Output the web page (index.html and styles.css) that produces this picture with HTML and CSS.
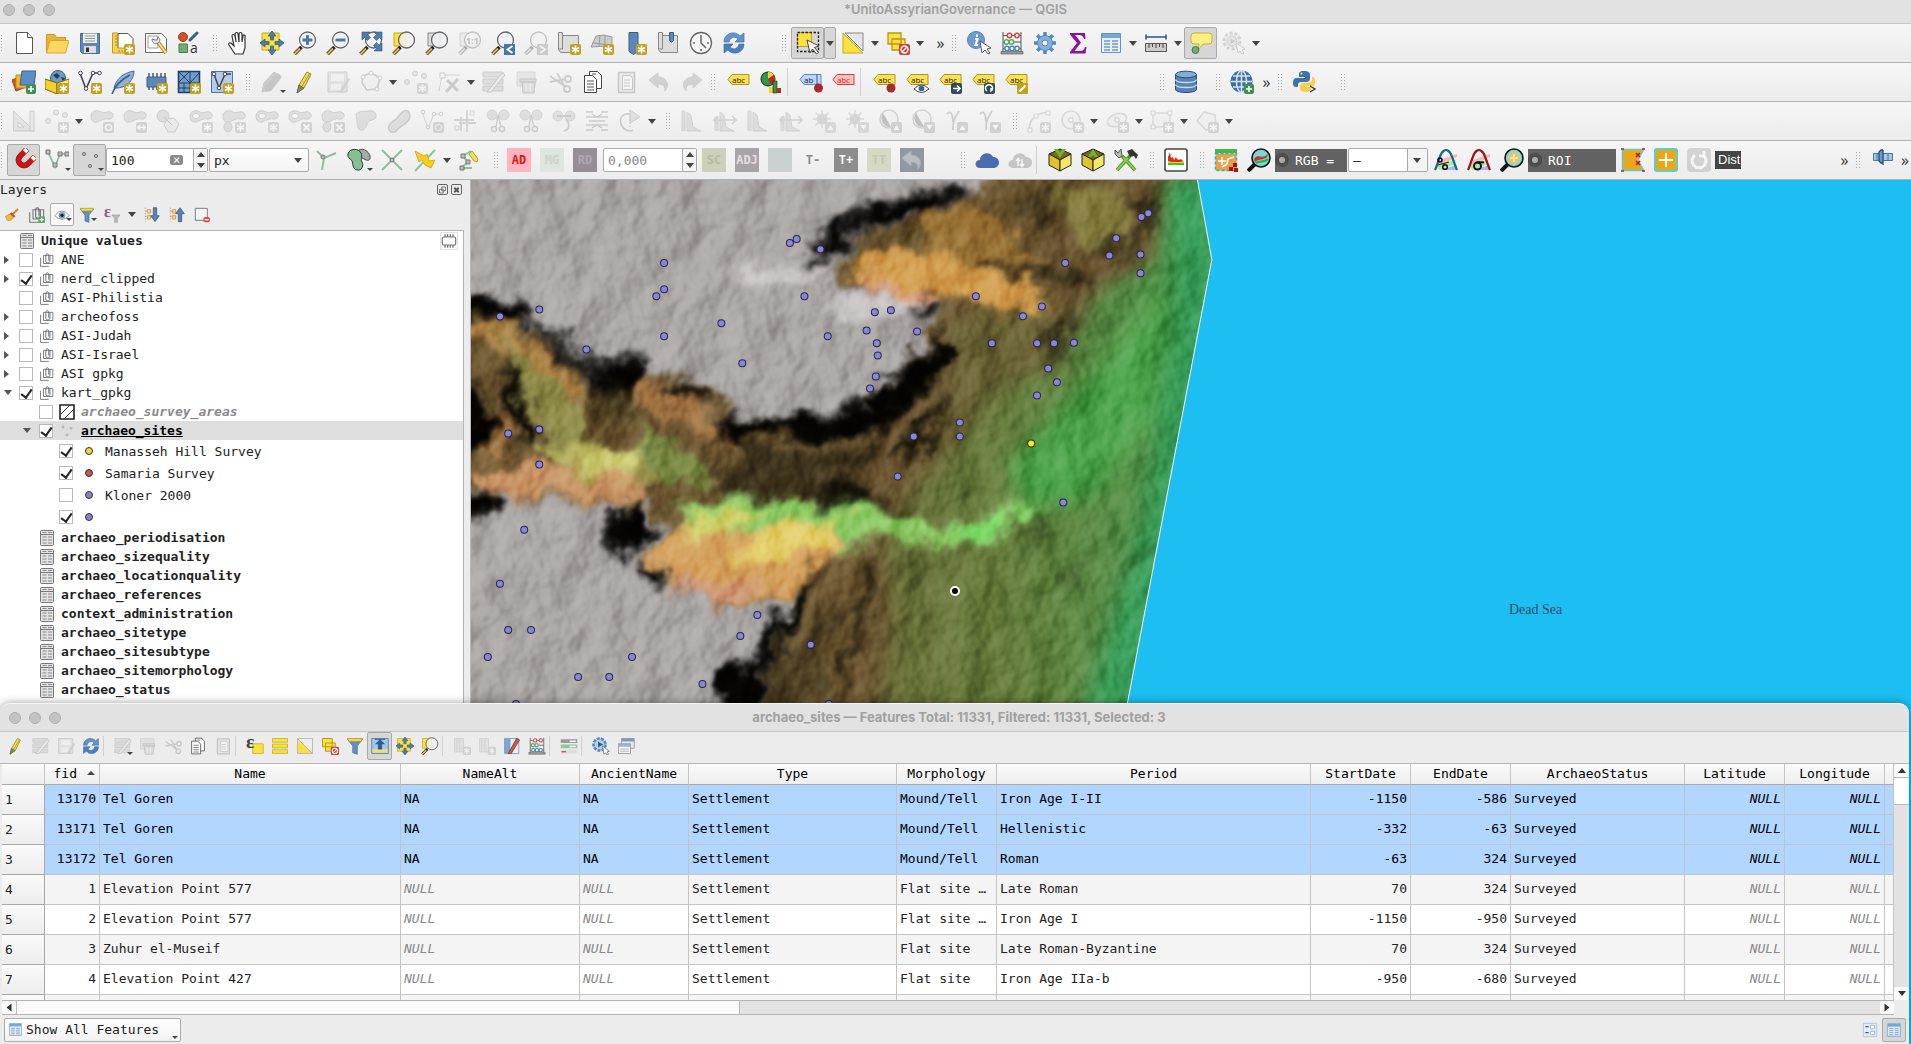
FILE: index.html
```html
<!DOCTYPE html>
<html lang="en">
<head>
<meta charset="utf-8">
<title>*UnitoAssyrianGovernance — QGIS</title>
<link rel="stylesheet" href="styles.css">
</head>
<body>
<svg class="defs" aria-hidden="true">
<defs>
<symbol id="star" viewBox="0 0 24 24"><rect x="13" y="13" width="11" height="11" rx="2" fill="#c4a01c"/><path d="M18.5 14.5v8M15 16.500l7 4M22 16.500l-7 4" stroke="#fff" stroke-width="1.500"/></symbol>
<symbol id="mag" viewBox="0 0 24 24"><path d="M1.500 23l7-7" stroke="#222" stroke-width="3.500"/><path d="M1.500 23l5.500-5.500" stroke="#f0b93c" stroke-width="2"/><circle cx="14.500" cy="9" r="8" fill="#eef1f2" fill-opacity=".85" stroke="#666" stroke-width="1.300"/></symbol>
<symbol id="new" viewBox="0 0 24 24"><path d="M4.500 1.500h11l5 5v16h-16z" fill="#fff" stroke="#555"/><path d="M15.500 1.500v5h5" fill="#eee" stroke="#555"/></symbol>
<symbol id="open" viewBox="0 0 24 24"><path d="M1.500 22V3.500h8l2 3h9V10" fill="#e8b23a" stroke="#d29a22"/><path d="M1.500 22L5 9.500h19L20.500 22z" fill="#fcd660" stroke="#dba42c"/></symbol>
<symbol id="save" viewBox="0 0 24 24"><path d="M2.500 2.500h19v20h-17l-2-2z" fill="#5b88b8" stroke="#456f9c"/><path d="M5 2.500h14V12H5z" fill="#eee"/><path d="M7 5h10M7 7.500h10M7 10h10" stroke="#999"/><path d="M6 15h12v7H6z" fill="#ddd"/><path d="M8 16.500h3v4.500H8z" fill="#333"/></symbol>
<symbol id="layout" viewBox="0 0 24 24"><path d="M7 2.500h10l5 5v13H7z" fill="#fff" stroke="#555"/><path d="M1.500 2h5v15h9v5h-14z" fill="#f7d354" stroke="#c09a1e"/><path d="M4 5h2M4 8h2M4 11h2M4 14h2M8 19v2M11 19v2" stroke="#a8851a"/><use href="#star"/></symbol>
<symbol id="mgr" viewBox="0 0 24 24"><path d="M1.500 2.500h16l5 5v14h-21z" fill="#fff" stroke="#666"/><path d="M4 5h10v12H4z" fill="none" stroke="#999"/><path d="M14 11l8 11" stroke="#b4952c" stroke-width="4"/><path d="M14 11l8 11" stroke="#f5df7c" stroke-width="2"/><path d="M8 8c0 4 3 6 6 4s2-5 0-6l-1 3-2 0z" fill="#e4e4e4" stroke="#777"/></symbol>
<symbol id="style" viewBox="0 0 24 24"><circle cx="6" cy="6" r="4.500" fill="#d1512a" stroke="#a83a1a"/><path d="M2 13h8.500v8.500H2z" fill="#6fae73" stroke="#477b4b"/><path d="M13 9l7-7" stroke="#37608c" stroke-width="3" stroke-linecap="round"/><text x="13" y="22" font-size="14" font-family="Open Sans, sans-serif" fill="#333">a</text></symbol>
<symbol id="hand" viewBox="0 0 24 24"><path d="M8 23l-6-9c-1-2 1-3 3-1l2 2-2-10c0-2 2-2 3 0l1 6-1-8c0-2 3-2 3 0l1 8V3c0-2 3-2 3 0v8l1-6c0-2 3-1 2 1l0 11-2 6z" fill="#fff" stroke="#333" stroke-width="1.200"/></symbol>
<symbol id="arrows" viewBox="0 0 24 24"><path d="M12 0l4 5h-2.500v4h-3V5H8zM12 24l4-5h-2.500v-4h-3v4H8zM0 12l5-4v2.500h4v3H5V16zM24 12l-5-4v2.500h-4v3h4V16z" fill="#4d7cae" stroke="#2d527d" stroke-width=".7"/></symbol>
<symbol id="pan" viewBox="0 0 24 24"><path d="M2 2h17v17H2z" fill="#fbe13f" stroke="#c7a916"/><use href="#arrows"/></symbol>
<symbol id="zin" viewBox="0 0 24 24"><use href="#mag"/><path d="M14.500 4v10M9.500 9h10" stroke="#4576ab" stroke-width="2.800"/></symbol>
<symbol id="zout" viewBox="0 0 24 24"><use href="#mag"/><path d="M9.500 9h10" stroke="#4576ab" stroke-width="2.800"/></symbol>
<symbol id="zfull" viewBox="0 0 24 24"><use href="#mag"/><path d="M3 1h8L8.500 3.500l3 3-3 3-3-3L3 9zM23 1v8l-2.500-2.500-3 3-3-3 3-3L15 1zM23 20h-8l2.500-2.500-3-3 3-3 3 3L23 12z" fill="#4d7cae" stroke="#2d527d" stroke-width=".6"/></symbol>
<symbol id="zsel" viewBox="0 0 24 24"><path d="M2 2h12v13H2z" fill="#fbe13f" stroke="#c7a916"/><use href="#mag"/></symbol>
<symbol id="zlay" viewBox="0 0 24 24"><path d="M3 2h12v13H3z" fill="#ddd" stroke="#888"/><use href="#mag"/></symbol>
<symbol id="znat" viewBox="0 0 24 24"><path d="M2 2h18v13H2z" fill="#ddd" stroke="#999"/><use href="#mag"/><text x="8" y="13" font-size="9" font-family="Open Sans, sans-serif" font-weight="700" fill="#555">1:1</text></symbol>
<symbol id="zlast" viewBox="0 0 24 24"><use href="#mag"/><path d="M13 13h11v11H13z" fill="#4576ab"/><path d="M21.500 15l-5 3.500 5 3.500" fill="none" stroke="#fff" stroke-width="1.800"/></symbol>
<symbol id="znext" viewBox="0 0 24 24"><use href="#mag"/><path d="M13 13h11v11H13z" fill="#888"/><path d="M16 15l5 3.500-5 3.500" fill="none" stroke="#fff" stroke-width="1.800"/></symbol>
<symbol id="nmap" viewBox="0 0 24 24"><path d="M1.500 1.500h4v3h16v17h-18l-2-3z" fill="#ddd" stroke="#888"/><path d="M5.500 4v14h-4" fill="none" stroke="#888"/><use href="#star"/></symbol>
<symbol id="n3d" viewBox="0 0 24 24"><path d="M1 16L6 5l8-1 8 2v13l-6-4z" fill="#ccc" stroke="#999"/><path d="M3 12l18 2M10 4l-1 12M15 4v11" stroke="#999" fill="none"/><use href="#star"/></symbol>
<symbol id="bm" viewBox="0 0 24 24"><path d="M6 1.500h9v19l-4.500 3-4.500-3z" fill="#5b88b8" stroke="#35608f"/><use href="#star"/></symbol>
<symbol id="bms" viewBox="0 0 24 24"><path d="M2.500 1.500h4v3h15v17h-17l-2-3z" fill="#ddd" stroke="#888"/><path d="M6.500 4v14h-4" fill="none" stroke="#888"/><path d="M13.500 1.500h4v8l-2 2-2-2z" fill="#5b88b8" stroke="#35608f"/></symbol>
<symbol id="clock" viewBox="0 0 24 24"><circle cx="12" cy="12" r="10.500" fill="#f6f6f6" stroke="#666" stroke-width="1.300"/><path d="M12 4v8l5 5M12 20v-2M4 12h2M20 12h-2" fill="none" stroke="#666" stroke-width="1.500"/></symbol>
<symbol id="refresh" viewBox="0 0 24 24"><path d="M2 11c0-9 11-12 16-6l4-3v9h-9l3-3c-4-4-8-1-9 3z" fill="#5d94cf" stroke="#3b6da6" stroke-width=".7"/><path d="M22 13c0 9-11 12-16 6l-4 3v-9h9l-3 3c4 4 8 1 9-3z" fill="#4a7fbb" stroke="#3b6da6" stroke-width=".7"/></symbol>
<symbol id="sel" viewBox="0 0 24 24"><path d="M1.500 1.500h14v14h-14z" fill="#fbe13f" stroke="#c7a916"/><path d="M1.500 1.500h21v19h-21z" fill="none" stroke="#222" stroke-dasharray="2.500 1.500" stroke-width="1.400"/><path d="M11 9l12 6-4.500 1.500 4 5-2 1.500-4-5-2.500 4z" fill="#fff" stroke="#444"/></symbol>
<symbol id="selval" viewBox="0 0 24 24"><path d="M2 2l20 20H2z" fill="#fbe13f" stroke="#c7a916"/><path d="M4 2h18v18z" fill="#e6e6e6" stroke="#888"/></symbol>
<symbol id="desel" viewBox="0 0 24 24"><path d="M2 2h13v11H2zM6 8h13v11H6z" fill="#fbe13f" stroke="#b59613" stroke-width="1.300"/><rect x="13" y="13" width="11" height="11" rx="2" fill="#d93a3a"/><circle cx="18.500" cy="18.500" r="3.500" fill="none" stroke="#fff" stroke-width="1.400"/><path d="M16 21l5-5" stroke="#fff" stroke-width="1.400"/></symbol>
<symbol id="ident" viewBox="0 0 24 24"><circle cx="9" cy="9" r="8.500" fill="#6c9cce" stroke="#5483b5"/><path d="M10 3.500v2.500M8 8h2.500l-2 6h2.500" fill="none" stroke="#fff" stroke-width="2"/><path d="M13 10l11 7-4 1 3 4-2 1-3-4-3 3z" fill="#fff" stroke="#555"/></symbol>
<symbol id="abac" viewBox="0 0 24 24"><path d="M3 1v21M21 1v21M3 4.500h18M3 11h18M3 17.500h18" stroke="#555" fill="none"/><path d="M1 20.500h22v2.500H1z" fill="#999" stroke="#555" stroke-width=".6"/><g fill="#fff" stroke-width="1.500"><g stroke="#d04444"><circle cx="9.500" cy="4.500" r="2.200"/><circle cx="17" cy="4.500" r="2.200"/></g><g stroke="#5aa66a"><circle cx="6.500" cy="11" r="2.200"/><circle cx="11.500" cy="11" r="2.200"/></g><g stroke="#4a84b8"><circle cx="7" cy="17.500" r="2.200"/><circle cx="12" cy="17.500" r="2.200"/><circle cx="17" cy="17.500" r="2.200"/></g></g></symbol>
<symbol id="gear" viewBox="0 0 24 24"><path d="M12 1v22M1 12h22M4.200 4.200l15.600 15.600M19.800 4.200L4.200 19.800" stroke="#5887ba" stroke-width="3.500"/><circle cx="12" cy="12" r="7.500" fill="#84b0dd" stroke="#5887ba"/><circle cx="12" cy="12" r="3" fill="#f2f2f2" stroke="#5887ba"/></symbol>
<symbol id="sigma" viewBox="0 0 24 24"><path d="M4 2h15l.5 6h-1.500c-1-3-2-4-5-4H9l6 7.500L8.500 20H14c3 0 4-1 5-4h1.500l-1 6.500H4V21l7-9-7-8.500z" fill="#8d1299"/></symbol>
<symbol id="tbl" viewBox="0 0 24 24"><path d="M2.500 2.500h19v19h-19z" fill="#e8f0f8" stroke="#6890b8"/><path d="M3 3h18v4H3z" fill="#7ba6d3"/><path d="M5 10h6M13 10h6M5 13h6M13 13h6M5 16h6M13 16h6M5 19h6M13 19h6" stroke="#6d9bc9" stroke-width="1.300"/></symbol>
<symbol id="meas" viewBox="0 0 24 24"><path d="M2 6h20M2 3.500v5M22 3.500v5" stroke="#2d5385" stroke-width="1.500"/><path d="M1.500 12.500h21v8h-21z" fill="#ccc" stroke="#555"/><path d="M5 13v4M8.500 13v3M12 13v4M15.500 13v3M19 13v4" stroke="#444"/></symbol>
<symbol id="tip" viewBox="0 0 24 24"><path d="M5 2h15q3 0 3 3v5q0 3-3 3h-6l-5 6 1-6H5q-3 0-3-3V5q0-3 3-3z" fill="#fbef82" stroke="#c6b04a"/><circle cx="6.500" cy="19" r="3.500" fill="#76a876" stroke="#4b7a4b"/></symbol>
<symbol id="act" viewBox="0 0 24 24"><circle cx="10" cy="10" r="8" fill="#e8e8e8" stroke="#999" stroke-width="3" stroke-dasharray="3 2"/><circle cx="10" cy="10" r="5" fill="#ccc" stroke="#888"/><path d="M8.500 7.500l5 2.500-5 3z" fill="#888"/><path d="M14 12l9 6-3 1 2 3-2 1-2-3-2 2z" fill="#fff" stroke="#888"/></symbol>
<symbol id="dsm" viewBox="0 0 24 24"><path d="M0 10l10-4 4 11-10 4z" fill="#d2562a" stroke="#a63c18"/><path d="M4 5h13v13H4z" fill="#f0b92e" stroke="#b98a18"/><path d="M10 1h14l-2 14H8z" fill="#5b8ec4" stroke="#37618f"/><rect x="14" y="14" width="10" height="10" rx="2" fill="#3f8f54"/><path d="M19 16v6M16 19h6" stroke="#fff" stroke-width="1.600"/></symbol>
<symbol id="gpkg" viewBox="0 0 24 24"><circle cx="13" cy="8" r="7.500" fill="#6d9cc9" stroke="#365f8a"/><path d="M8 5l4-2 3 3-3 3zM16 7l4 1-2 4z" fill="#243f5e"/><path d="M0 9l12 4v11L0 19z" fill="#f3d22c" stroke="#7d6510"/><path d="M12 13l12-4v10l-12 5z" fill="#fbe76c" stroke="#7d6510"/><use href="#star"/></symbol>
<symbol id="vnew" viewBox="0 0 24 24"><path d="M2 3l6 16 7-16h7" fill="none" stroke="#445" stroke-width="1.600"/><g fill="#fff" stroke="#445"><circle cx="2.500" cy="3" r="1.800"/><circle cx="8" cy="18.500" r="1.800"/><circle cx="15" cy="3" r="1.800"/><circle cx="21.500" cy="3" r="1.800"/></g><use href="#star"/></symbol>
<symbol id="feath" viewBox="0 0 24 24"><path d="M3 18C5 9 12 3 23 1c0 8-6 16-16 17z" fill="#8db2dc" stroke="#456f9f"/><path d="M1 24C4 16 11 9 19 5" fill="none" stroke="#345a86" stroke-width="1.500"/><use href="#star"/></symbol>
<symbol id="chip" viewBox="0 0 24 24"><path d="M5 3v17M9 3v17M13 3v17M17 3v17M21 3v17" stroke="#345" stroke-width="1.300"/><path d="M3 7h19v10H3z" fill="#5b88b8" stroke="#35608f"/><use href="#star"/></symbol>
<symbol id="mesh" viewBox="0 0 24 24"><path d="M1.500 1.500h21v21h-21z" fill="#6f9dce" stroke="#223f60" stroke-width="1.600"/><path d="M13 1v22M1 13h22M1 1l12 12L23 2M1 13L12 2M7 13v10M1 18h12" stroke="#223f60" fill="none"/><use href="#star"/></symbol>
<symbol id="gpx" viewBox="0 0 24 24"><path d="M1.500 1.500h21v21h-21z" fill="#b5cde8" stroke="#4676a8"/><path d="M4 4l5 14 6-14h6" fill="none" stroke="#445" stroke-width="1.500"/><g fill="#fff" stroke="#445"><circle cx="4" cy="4" r="1.800"/><circle cx="9" cy="18" r="1.800"/><circle cx="15" cy="4" r="1.800"/></g><use href="#star"/></symbol>
<symbol id="pens" viewBox="0 0 24 24"><path d="M2 22l2-9L14 2l6 4-9 13z" fill="#888" stroke="#777"/><path d="M5 22l1-7L18 3l4 4-11 14z" fill="#777"/></symbol>
<symbol id="pen" viewBox="0 0 24 24"><path d="M4 23l2-8 8-13 4 2-7 14z" fill="#f3dd4b" stroke="#9a8420"/><path d="M4 23l2-8 5 3z" fill="#8a8a6a" stroke="#555" stroke-width=".7"/><path d="M9 16l8-13" stroke="#a9922a"/></symbol>
<symbol id="sedit" viewBox="0 0 24 24"><path d="M2 2h19v20H2z" fill="#c8c8c8" stroke="#888"/><path d="M5 4h13v7H5zM5 14h10v6H5z" fill="#eee"/><path d="M13 22l9-14 2 1-8 14z" fill="#999"/></symbol>
<symbol id="poly" viewBox="0 0 24 24"><path d="M4 6l8-3 9 5-3 11-10 1-5-7z" fill="#eee" stroke="#888" stroke-width="1.600"/><g fill="#fff" stroke="#888"><circle cx="12" cy="3" r="2"/><circle cx="21" cy="8" r="2"/><circle cx="18" cy="19" r="2"/><circle cx="4" cy="7" r="2"/></g></symbol>
<symbol id="pts" viewBox="0 0 24 24"><g fill="#ccc" stroke="#888"><circle cx="3" cy="12" r="2.500"/><circle cx="11" cy="3.500" r="2.500"/><circle cx="20" cy="6" r="2.500"/></g><use href="#star"/></symbol>
<symbol id="vert" viewBox="0 0 24 24"><path d="M5 6L2 21M5 5h18" stroke="#999"/><path d="M3 3h5v5H3z" fill="#fff" stroke="#888"/><path d="M9 22L21 9M10 10l11 11" stroke="#888" stroke-width="3"/></symbol>
<symbol id="multi" viewBox="0 0 24 24"><path d="M1 2h20v5H1zM1 9h20v5H1zM1 16h20v5H1z" fill="#bbb" stroke="#888"/><path d="M5 22L20 3l3 2L9 22z" fill="#ddd" stroke="#777"/></symbol>
<symbol id="trash" viewBox="0 0 24 24"><path d="M2 2h18v14H2z" fill="#ccc" stroke="#aaa"/><path d="M5 9h16v3H5zM7 12h13l-1 11H8z" fill="#bbb" stroke="#777"/><path d="M11 14v7M15 14v7" stroke="#eee" stroke-width="1.500"/></symbol>
<symbol id="cut" viewBox="0 0 24 24"><path d="M2 6l16 11M9 3l8 14" stroke="#888" stroke-width="1.800"/><circle cx="20" cy="9" r="3" fill="none" stroke="#888" stroke-width="1.800"/><circle cx="19" cy="19" r="3" fill="none" stroke="#888" stroke-width="1.800"/><path d="M2 12l16-3" stroke="#888" stroke-width="1.800"/></symbol>
<symbol id="copy" viewBox="0 0 24 24"><path d="M8.500 1.500h8l4 4v13h-12z" fill="#fff" stroke="#444"/><path d="M3.500 5.500h8l4 4v13h-12z" fill="#fff" stroke="#444"/><path d="M6 11h7M6 14h7M6 17h7M6 20h7M11 4h4" stroke="#555"/></symbol>
<symbol id="paste" viewBox="0 0 24 24"><path d="M4.500 2.500h16v20h-16z" fill="#ddd" stroke="#777" stroke-width="1.500"/><path d="M8.500 5.500h8l2 3v11h-10z" fill="#fff" stroke="#777"/><path d="M10 10h6M10 13h6M10 16h6" stroke="#777"/></symbol>
<symbol id="undo" viewBox="0 0 24 24"><path d="M2 10l9-7v4c9 0 12 8 7 14 0-5-2-7-7-7v4z" fill="#999" stroke="#888"/></symbol>
<symbol id="redo" viewBox="0 0 24 24"><path d="M22 10l-9-7v4c-9 0-12 8-7 14 0-5 2-7 7-7v4z" fill="#999" stroke="#888"/></symbol>
<symbol id="tagy" viewBox="0 0 24 24"><path d="M2 9.500l4-5h17v10H6z" fill="#f8e154" stroke="#b4961a"/><text x="6" y="12.500" font-size="8" font-family="Open Sans, sans-serif" fill="#222">abc</text></symbol>
<symbol id="tagb" viewBox="0 0 24 24"><path d="M1 9.500l4-5h17v10H5z" fill="#bcd6f5" stroke="#4f8fdc"/><text x="5" y="12.500" font-size="8" font-family="Open Sans, sans-serif" fill="#222">ab</text><path d="M18 4v10" stroke="#557"/><circle cx="19.500" cy="18" r="4.500" fill="#a92a2c"/></symbol>
<symbol id="tagr" viewBox="0 0 24 24"><path d="M1 9.500l4-5h17v10H5z" fill="#fbc4c4" stroke="#e33"/><text x="5" y="12.500" font-size="8" font-family="Open Sans, sans-serif" fill="#d22">abc</text></symbol>
<symbol id="tagp" viewBox="0 0 24 24"><use href="#tagy"/><circle cx="19" cy="18" r="4.500" fill="#a92a2c"/></symbol>
<symbol id="tage" viewBox="0 0 24 24"><use href="#tagy"/><path d="M9 19q7.500-8 15 0-7.500 7-15 0z" fill="#fff" stroke="#444"/><circle cx="16.500" cy="18.500" r="2.800" fill="#2f62a8"/></symbol>
<symbol id="tagm" viewBox="0 0 24 24"><use href="#tagy"/><rect x="13" y="13" width="11" height="11" rx="2" fill="#34495e"/><path d="M15 18.500h7M19 15.500l3 3-3 3" fill="none" stroke="#fff" stroke-width="1.600"/></symbol>
<symbol id="tagt" viewBox="0 0 24 24"><use href="#tagy"/><rect x="13" y="13" width="11" height="11" rx="2" fill="#34495e"/><path d="M16 21a3.500 3.500 0 1 1 4 0v-3" fill="none" stroke="#fff" stroke-width="1.500"/></symbol>
<symbol id="tagc" viewBox="0 0 24 24"><use href="#tagy"/><rect x="13" y="13" width="11" height="11" rx="1" fill="#c4a01c"/><path d="M15.500 21.500l6-6" stroke="#fff" stroke-width="2.200"/></symbol>
<symbol id="diag" viewBox="0 0 24 24"><circle cx="9" cy="9" r="7" fill="#2e9a48" stroke="#222"/><path d="M9 9V2a7 7 0 0 1 6 3z" fill="#fbd32f"/><path d="M9 9l6-4a7 7 0 0 1-3 10z" fill="#c92222"/><path d="M10 17h4v6h-4z" fill="#fbd32f"/><path d="M14 11h4v12h-4z" fill="#2e9a48" stroke="#222" stroke-width=".6"/><path d="M18 18h4v5h-4z" fill="#c92222"/></symbol>
<symbol id="db" viewBox="0 0 24 24"><path d="M1.500 4.500v15c0 4 21 4 21 0v-15" fill="#5583b4" stroke="#2c4f78"/><ellipse cx="12" cy="4.500" rx="10.500" ry="3.300" fill="#84abd4" stroke="#2c4f78"/><path d="M1.500 9.500c0 4 21 4 21 0M1.500 14.500c0 4 21 4 21 0" fill="none" stroke="#c9dbee" stroke-width="1.300"/></symbol>
<symbol id="globe" viewBox="0 0 24 24"><circle cx="11.500" cy="11.500" r="11" fill="#3f6da2"/><g fill="none" stroke="#d5e4f2" stroke-width="1.500"><ellipse cx="11.500" cy="11.500" rx="5" ry="11"/><path d="M11.500 1v21M1 11.500h21M3 6h17M3 17h17"/></g><rect x="14" y="14" width="10" height="10" rx="2" fill="#3f8f54"/><path d="M19 16v6M16 19h6" stroke="#fff" stroke-width="1.600"/></symbol>
<symbol id="py" viewBox="0 0 24 24"><path d="M11 1c-5 0-5 2-5 4v2h6v1H4c-3 0-4 2-4 5s1 4 3 4h2v-2c0-2 1-3 4-3h4c2 0 4-1 4-3V5c0-3-2-4-6-4z" fill="#3b74a8"/><path d="M19 7v3c0 2-2 3-4 3h-4c-2 0-4 1-4 3v3c0 2 2 3 6 3 3 0 5-1 5-3v-2h-6v-1h7c3 0 3-2 3-5s-1-4-3-4z" fill="#f8cf43"/><circle cx="8.500" cy="3.500" r="1" fill="#fff"/><path d="M17 16l5 3-5 3" fill="none" stroke="#333" stroke-width="1.300"/></symbol>
<symbol id="tri" viewBox="0 0 24 24"><path d="M1.500 2v20h21z" fill="#ccc" stroke="#888"/><path d="M6 13v5h6z" fill="#f4f4f4" stroke="#888"/><path d="M18 2h4v20h-4z" fill="#ddd" stroke="#888"/></symbol>
<symbol id="blob" viewBox="0 0 24 24"><path d="M1 7c0-6 7-6 10-4s8-2 11 1 0 7-4 6-7 2-11 3-6-2-6-6z" fill="#bbb" stroke="#888"/></symbol>
<symbol id="bl1" viewBox="0 0 24 24"><use href="#blob"/><rect x="13" y="13" width="11" height="11" rx="2" fill="#999"/><circle cx="18.500" cy="18.500" r="3" fill="none" stroke="#fff" stroke-width="1.600"/></symbol>
<symbol id="bl2" viewBox="0 0 24 24"><use href="#blob"/><rect x="13" y="13" width="11" height="11" rx="2" fill="#999"/><path d="M15 18.500h7M17 16l-2.500 2.500L17 21M20 16l2.500 2.500L20 21" fill="none" stroke="#fff" stroke-width="1.400"/></symbol>
<symbol id="bl3" viewBox="0 0 24 24"><circle cx="7" cy="7" r="6" fill="#bbb" stroke="#888"/><path d="M11 10l7-1 5 6-4 8h-7l-4-7z" fill="#ddd" stroke="#888"/><path d="M8 8l8 8" stroke="#777"/></symbol>
<symbol id="bl4" viewBox="0 0 24 24"><use href="#blob"/><ellipse cx="7" cy="7" rx="3.500" ry="2.500" fill="#fff" stroke="#888"/><use href="#star"/></symbol>
<symbol id="bl5" viewBox="0 0 24 24"><use href="#blob"/><ellipse cx="6" cy="18" rx="4" ry="5" fill="#bbb" stroke="#888"/><use href="#star"/></symbol>
<symbol id="bl6" viewBox="0 0 24 24"><use href="#blob"/><ellipse cx="7" cy="7" rx="3.500" ry="2.500" fill="#fff" stroke="#888"/><rect x="13" y="13" width="11" height="11" rx="2" fill="#999"/><path d="M15.500 15.500l6 6M21.500 15.500l-6 6" stroke="#fff" stroke-width="1.800"/></symbol>
<symbol id="bl7" viewBox="0 0 24 24"><use href="#blob"/><ellipse cx="6" cy="18" rx="4" ry="5" fill="#bbb" stroke="#888"/><rect x="13" y="13" width="11" height="11" rx="2" fill="#999"/><path d="M15.500 15.500l6 6M21.500 15.500l-6 6" stroke="#fff" stroke-width="1.800"/></symbol>
<symbol id="resh" viewBox="0 0 24 24"><path d="M2 5c5-4 9-2 13-3s8 2 7 6-8 2-9 7-5 8-8 5-1-8-3-15z" fill="#bbb" stroke="#888"/></symbol>
<symbol id="offs" viewBox="0 0 24 24"><path d="M3 22c-4-4 1-9 5-11s4-7 9-9 8 5 4 10-7 4-10 8-6 4-8 2z" fill="#bbb" stroke="#888" stroke-width="1.600"/></symbol>
<symbol id="simp" viewBox="0 0 24 24"><path d="M2 3l6 16 6-14h8" fill="none" stroke="#999"/><g fill="#fff" stroke="#888"><circle cx="3" cy="3" r="1.800"/><circle cx="8" cy="18" r="1.800"/><circle cx="14" cy="5" r="1.800"/><circle cx="21" cy="5" r="1.800"/></g><rect x="13" y="13" width="11" height="11" rx="2" fill="#999"/><circle cx="18.500" cy="18.500" r="3" fill="none" stroke="#fff"/></symbol>
<symbol id="trim" viewBox="0 0 24 24"><path d="M1 11h20M14 1v22M8 8v14M6 14h17" stroke="#999" stroke-width="1.800"/><path d="M17 2h4v4h-4zM2 17h4v4H2z" fill="none" stroke="#999"/></symbol>
<symbol id="split" viewBox="0 0 24 24"><circle cx="6" cy="6" r="5" fill="#bbb" stroke="#999"/><circle cx="18" cy="6" r="5" fill="#bbb" stroke="#999"/><path d="M12 6l-2 12M12 6l3 12" stroke="#888" stroke-width="1.500"/><circle cx="8" cy="20" r="2.500" fill="none" stroke="#888" stroke-width="1.500"/><circle cx="16" cy="20" r="2.500" fill="none" stroke="#888" stroke-width="1.500"/></symbol>
<symbol id="merge" viewBox="0 0 24 24"><circle cx="6" cy="7" r="5" fill="#bbb" stroke="#999"/><circle cx="18" cy="7" r="5" fill="#bbb" stroke="#999"/><path d="M5 7h14M12 22c6-2 6-7 2-12" stroke="#888" stroke-width="1.800" fill="none"/></symbol>
<symbol id="vm" viewBox="0 0 24 24"><path d="M1 3h7M16 3h7M1 8h22M4 12h16M1 16h22M1 21h7M16 21h7M7 5l5 3 5-3M7 19l5-3 5 3" stroke="#888" stroke-width="1.400" fill="none"/></symbol>
<symbol id="rot" viewBox="0 0 24 24"><path d="M11 5C5 4 1 9 3 15s8 8 12 6" fill="none" stroke="#888" stroke-width="1.600"/><path d="M12 1l10 7-10 6z" fill="#bbb" stroke="#888"/><path d="M12 1v17" stroke="#888" stroke-dasharray="2 1"/></symbol>
<symbol id="hist" viewBox="0 0 24 24"><path d="M2 22V2h3v20M7 22V3l4 3 2 12 8 4z" fill="#b4bbb4" stroke="#999"/></symbol>
<symbol id="hist2" viewBox="0 0 24 24"><path d="M2 22V8h3v14M7 22V3l4 3 2 12 8 4z" fill="#b4bbb4" stroke="#999"/><path d="M2 11h20M19 7l4 4-4 4M5 7l-4 4 4 4" fill="none" stroke="#999" stroke-width="1.600"/></symbol>
<symbol id="sunu" viewBox="0 0 24 24"><path d="M10 1v18M1 10h18M3.500 3.500l13 13M16.500 3.500l-13 13" stroke="#aaa" stroke-width="1.500"/><circle cx="10" cy="10" r="5.500" fill="#a4a4a4"/><rect x="13" y="13" width="11" height="11" rx="2" fill="#aaa"/><path d="M15.500 21l3-5 3 5z" fill="#fff"/></symbol>
<symbol id="sund" viewBox="0 0 24 24"><path d="M10 1v18M1 10h18M3.500 3.500l13 13M16.500 3.500l-13 13" stroke="#aaa" stroke-width="1.500"/><circle cx="10" cy="10" r="5.500" fill="#a4a4a4"/><rect x="13" y="13" width="11" height="11" rx="2" fill="#aaa"/><path d="M15.500 16l3 5 3-5z" fill="#fff"/></symbol>
<symbol id="conu" viewBox="0 0 24 24"><circle cx="11" cy="10" r="9" fill="#eee" stroke="#999" stroke-width="1.500"/><path d="M5 4a9 9 0 0 0 8 14z" fill="#666"/><rect x="13" y="13" width="11" height="11" rx="2" fill="#999"/><path d="M15.500 21l3-5 3 5z" fill="#fff"/></symbol>
<symbol id="cond" viewBox="0 0 24 24"><circle cx="11" cy="10" r="9" fill="#eee" stroke="#999" stroke-width="1.500"/><path d="M5 4a9 9 0 0 0 8 14z" fill="#666"/><rect x="13" y="13" width="11" height="11" rx="2" fill="#999"/><path d="M15.500 16l3 5 3-5z" fill="#fff"/></symbol>
<symbol id="gamu" viewBox="0 0 24 24"><path d="M3 5c4-5 6 2 6 8M15 2c-5 8-6 10-6 19" fill="none" stroke="#888" stroke-width="1.700"/><rect x="13" y="13" width="11" height="11" rx="2" fill="#999"/><path d="M15.500 21l3-5 3 5z" fill="#fff"/></symbol>
<symbol id="gamd" viewBox="0 0 24 24"><path d="M3 5c4-5 6 2 6 8M15 2c-5 8-6 10-6 19" fill="none" stroke="#888" stroke-width="1.700"/><rect x="13" y="13" width="11" height="11" rx="2" fill="#999"/><path d="M15.500 16l3 5 3-5z" fill="#fff"/></symbol>
<symbol id="arc" viewBox="0 0 24 24"><path d="M2 22c0-12 6-18 20-19" fill="none" stroke="#999" stroke-width="1.500"/><path d="M1 19h4v4H1zM7 5h4v4H7zM19 2h4v4h-4z" fill="#fff" stroke="#999"/><use href="#star"/></symbol>
<symbol id="circ" viewBox="0 0 24 24"><circle cx="11" cy="11" r="9" fill="#ececec" stroke="#aaa" stroke-width="1.600"/><path d="M9 9h4v4H9z" fill="#fff" stroke="#888"/><use href="#star"/></symbol>
<symbol id="elli" viewBox="0 0 24 24"><ellipse cx="12" cy="11" rx="10" ry="6" transform="rotate(-20 12 11)" fill="#ececec" stroke="#aaa" stroke-width="1.600"/><path d="M10 9h4v4h-4z" fill="#fff" stroke="#888"/><use href="#star"/></symbol>
<symbol id="rect" viewBox="0 0 24 24"><path d="M3 4h17v14H3z" fill="#ececec" stroke="#aaa" stroke-width="1.500"/><path d="M1 2h4v4H1zM18 2h4v4h-4zM1 16h4v4H1z" fill="#fff" stroke="#999"/><use href="#star"/></symbol>
<symbol id="hexa" viewBox="0 0 24 24"><path d="M2 12L9 3l11 3 1 11-10 4z" fill="#ececec" stroke="#aaa" stroke-width="1.600"/><use href="#star"/></symbol>
<symbol id="magnet" viewBox="0 0 24 24"><g transform="rotate(45 12 12)"><path d="M4 3h5v9a3 3 0 0 0 6 0V3h5v9a8 8 0 0 1-16 0z" fill="#cf1214" stroke="#8b0b0c" stroke-width=".7"/><path d="M4 2h5v4H4zM15 2h5v4h-5z" fill="#fff" stroke="#a22" stroke-width=".7"/></g></symbol>
<symbol id="vsnap" viewBox="0 0 24 24"><path d="M3 4l7 15 5-13h7" fill="none" stroke="#8fc29b" stroke-width="1.800"/><path d="M1 2h4v4H1zM8 15h4v4H8zM13 4h4v4h-4zM20 4h4v4h-4z" fill="#bbb" stroke="#777"/></symbol>
<symbol id="dots3" viewBox="0 0 24 24"><g fill="#bbb" stroke="#777"><circle cx="6" cy="6" r="1.600"/><circle cx="18" cy="8" r="1.600"/><circle cx="12" cy="18" r="1.600"/></g></symbol>
<symbol id="topo" viewBox="0 0 24 24"><path d="M3 3l7 7 12-5M10 10l-2 12" fill="none" stroke="#8fc29b" stroke-width="2"/><circle cx="9" cy="9" r="2" fill="#bbb" stroke="#777"/></symbol>
<symbol id="over" viewBox="0 0 24 24"><path d="M10 4c4-6 12-1 13 4s-3 5-6 3-6-3-7-7z" fill="#aaa" stroke="#444"/><path d="M1 6c1-6 11-6 13-1s-1 6 1 9 0 9-5 8-4-7-5-9-5-3-4-7z" fill="#84bf90" stroke="#334"/></symbol>
<symbol id="inter" viewBox="0 0 24 24"><path d="M2 2l20 20M22 2L2 22" stroke="#8fc29b" stroke-width="2"/><circle cx="12" cy="12" r="2" fill="#bbb" stroke="#777"/></symbol>
<symbol id="bolt" viewBox="0 0 24 24"><path d="M22 2L2 23" stroke="#8fc29b" stroke-width="2"/><path d="M2 3l9 5 3-2 2 7 6-1-4 8-6-3-3-5-3 2z" fill="#f8ce16" stroke="#c69c08" stroke-width=".7"/></symbol>
<symbol id="trace" viewBox="0 0 24 24"><path d="M3 20l7-6-5-6 8-5M4 20h10" fill="none" stroke="#8fc29b" stroke-width="2"/><path d="M3 6h4v4H3zM8 12h4v4H8zM2 18h4v4H2z" fill="#bbb" stroke="#777"/><path d="M14 3l6 8-1 3-3-1-5-7z" fill="#f0df55" stroke="#b9a52e"/></symbol>
<symbol id="cloud" viewBox="0 0 24 24"><path d="M5 20c-6 0-6-8 0-8 0-8 11-9 13-3 8 0 8 11 0 11z" fill="#4a6cb0"/></symbol>
<symbol id="cloud2" viewBox="0 0 24 24"><path d="M5 20c-6 0-6-8 0-8 0-8 11-9 13-3 8 0 8 11 0 11z" fill="#777"/><path d="M10 18v-7M8 13l2-2.500 2 2.500M14 11v7M12 16l2 2.500 2-2.500" fill="none" stroke="#fff" stroke-width="1.500"/></symbol>
<symbol id="boxd" viewBox="0 0 24 24"><path d="M1 6l11-5 11 5-11 6z" fill="#7b6a12" stroke="#222"/><path d="M1 6l11 6v11L1 17z" fill="#e2c42a" stroke="#222"/><path d="M12 12l11-6v11l-11 6z" fill="#f9e763" stroke="#222"/><path d="M6 1h4l2 4 2-4h4l-6 9z" fill="#72b52e"/></symbol>
<symbol id="boxu" viewBox="0 0 24 24"><path d="M1 6l11-5 11 5-11 6z" fill="#7b6a12" stroke="#222"/><path d="M1 6l11 6v11L1 17z" fill="#e2c42a" stroke="#222"/><path d="M12 12l11-6v11l-11 6z" fill="#f9e763" stroke="#222"/><path d="M12 1l5 8h-3l-2-2-2 2H7z" fill="#72b52e"/></symbol>
<symbol id="tools" viewBox="0 0 24 24"><path d="M21 22L8 8M3 22L16 8" stroke="#4f9a22" stroke-width="3.600"/><path d="M21 22L9 9M3 22L14 10" stroke="#8bd14e" stroke-width="1.800"/><path d="M13 3l5-2 6 6-2 4-2-3-4 1z" fill="#333"/><path d="M1 2l3 3 3-4 1 7-3 2-4-4z" fill="#bbb" stroke="#555"/></symbol>
<symbol id="spec" viewBox="0 0 24 24"><rect x="1" y="1" width="22" height="22" rx="2" fill="#fff" stroke="#444" stroke-width="1.600"/><path d="M4 15v-6l2-5 1 6 2-1 1 3 2-3 1 2 2 1 2-1 2 2v2z" fill="#e02a1c"/><path d="M4 13l4 1h8l4-1v4H4z" fill="#e8d81c"/><path d="M4 15h16v2H4z" fill="#3ec41c"/></symbol>
<symbol id="scp" viewBox="0 0 24 24"><path d="M1 1h22v4H1z" fill="#45b649"/><path d="M1.500 5.500h21v17h-21z" fill="#e6a04c" stroke="#27b6b6" stroke-dasharray="3 2" stroke-width="1.500"/><path d="M8 9v8M4 13h8M20 9l-6 2-1 5-5 3" stroke="#fff" stroke-width="1.600" fill="none"/><path d="M19 15h4v4h-4zM15 19h4v4h-4zM20 20h4v4h-4z" fill="#b01010"/></symbol>
<symbol id="bandz" viewBox="0 0 24 24"><path d="M1 23l7-7" stroke="#111" stroke-width="4"/><circle cx="14" cy="10" r="9" fill="#7fd4d4" stroke="#111" stroke-width="1.600"/><path d="M7 11c4-6 8 1 14-5-1 7-9 4-13 8z" fill="#c4372d"/><path d="M9 15c4-3 8 0 12-4" stroke="#3a4" fill="none" stroke-width="2"/></symbol>
<symbol id="pct" viewBox="0 0 24 24"><path d="M3 18l18-6v4L5 22z" fill="#a6f09a"/><path d="M3 13l20-7v3L3 18z" fill="#f8b8b8"/><path d="M6 22l17-5v5z" fill="#a8b8f8"/><path d="M1 22C5 14 6 2 12 2s7 12 11 20" fill="none" stroke="#156a86" stroke-width="2.200"/><path d="M4 17l11-3" stroke="#111"/><circle cx="6" cy="12" r="2" fill="none" stroke="#111" stroke-width="1.600"/><circle cx="11" cy="19" r="2.300" fill="none" stroke="#111" stroke-width="1.600"/></symbol>
<symbol id="sig" viewBox="0 0 24 24"><path d="M3 18l18-6v4L5 22z" fill="#a6f09a"/><path d="M3 13l20-7v3L3 18z" fill="#f8b8b8"/><path d="M6 22l17-5v5z" fill="#a8b8f8"/><path d="M1 22C5 14 6 2 12 2s7 12 11 20" fill="none" stroke="#9b1414" stroke-width="2.200"/><circle cx="10.500" cy="18" r="3.500" fill="none" stroke="#111" stroke-width="2"/><path d="M10 14.300h7" stroke="#111" stroke-width="2"/></symbol>
<symbol id="roiz" viewBox="0 0 24 24"><path d="M1 23l7-7" stroke="#111" stroke-width="4"/><circle cx="14" cy="10" r="9" fill="#7fdcd8" stroke="#111" stroke-width="1.600"/><circle cx="14" cy="10" r="6" fill="#e8c07a"/><path d="M14 6v8M10 10h8" stroke="#ffe98a" stroke-width="2"/></symbol>
<symbol id="roip" viewBox="0 0 24 24"><path d="M1.500 1.500h21L17 12l5.500 10.500h-21z" fill="#eaa71c" stroke="#55cfd0" stroke-width="1.600"/><path d="M15 5l4 4M19 5l-4 4M15 13l4 4M19 13l-4 4M0 1h3M21 1h3M0 23h3M21 23h3" stroke="#d11" stroke-width="1.600"/></symbol>
<symbol id="roia" viewBox="0 0 24 24"><rect x="1" y="1" width="22" height="22" rx="2" fill="#eaa71c" stroke="#55cfd0" stroke-width="2"/><path d="M12 5v14M5 12h14" stroke="#fff" stroke-width="2"/></symbol>
<symbol id="redor" viewBox="0 0 24 24"><rect width="24" height="24" rx="4" fill="#999"/><path d="M8 7a7 7 0 1 0 8 0M12 8h5V3" fill="none" stroke="#fff" stroke-width="3"/></symbol>
<symbol id="prof" viewBox="0 0 24 24"><path d="M2.500 5.500h19v7h-19z" fill="#a8c6e6" stroke="#4676a8"/><path d="M6 5.500v7M17 5.500v7" stroke="#4676a8"/><path d="M12 2h-2l-2 2v9l2 2h2v2M12 2v13" fill="#6d9bc9" stroke="#284d77" stroke-width="1.300"/></symbol>
<symbol id="brush" viewBox="0 0 24 24"><path d="M12 12l9-9" stroke="#d08a2c" stroke-width="3"/><path d="M2 14c3-1 5-3 8-4l4 5c-1 5-6 6-9 5z" fill="#f0b840" stroke="#c58a20"/><path d="M10 9l6 6" stroke="#d9453a" stroke-width="3"/></symbol>
<symbol id="grp" viewBox="0 0 24 24"><path d="M1 8v15h14M6 4h16v14H6z" fill="none" stroke="#777" stroke-width="1.600"/><path d="M15 13V5c0-5-5-5-5 0v9c0 4 7 4 7 0V4" fill="none" stroke="#667" stroke-width="1.600"/></symbol>
<symbol id="addg" viewBox="0 0 24 24"><use href="#grp"/><rect x="14" y="14" width="10" height="10" rx="2" fill="#5da46c"/><path d="M19 16v6M16 19h6" stroke="#fff" stroke-width="1.800"/></symbol>
<symbol id="eye" viewBox="0 0 24 24"><path d="M1 13q11-14 22 0-11 11-22 0z" fill="#fff" stroke="#999" stroke-width="1.500"/><circle cx="12" cy="12.500" r="5" fill="#7ba0c4"/><circle cx="12" cy="12.500" r="2.500" fill="#222"/></symbol>
<symbol id="filt" viewBox="0 0 24 24"><path d="M2 3h20l-7 9v11l-6-2v-9z" fill="#6390c0" stroke="#45709e"/><path d="M2 2h20l-2 4H4z" fill="#f0dc50" stroke="#a99420"/></symbol>
<symbol id="eps" viewBox="0 0 24 24"><text x="0" y="15" font-size="24" font-family="Liberation Serif, serif" font-weight="700" fill="#8c5a8c">ε</text><path d="M12 12h12l-4 5v6h-4v-6z" fill="#bbb" stroke="#999"/></symbol>
<symbol id="exp" viewBox="0 0 24 24"><path d="M2 1v21M2 6h6M2 14h6" stroke="#888" stroke-dasharray="2 2"/><path d="M5 4h5v5H5zM5 13h5v5H5z" fill="#fbd9a8" stroke="#e89a3a" stroke-width="1.500"/><path d="M14 1h5v12h4l-6.500 9L10 13h4z" fill="#5583b4" stroke="#2c4f78"/></symbol>
<symbol id="col" viewBox="0 0 24 24"><path d="M2 1v21M2 6h6M2 14h6" stroke="#888" stroke-dasharray="2 2"/><path d="M5 4h5v5H5zM5 13h5v5H5z" fill="#fbd9a8" stroke="#e89a3a" stroke-width="1.500"/><path d="M14 22h5V10h4l-6.500-9L10 10h4z" fill="#5583b4" stroke="#2c4f78"/></symbol>
<symbol id="rem" viewBox="0 0 24 24"><path d="M2 2h18v18H2z" fill="#f3f3f3" stroke="#777" stroke-width="1.400"/><rect x="14" y="15" width="10" height="8" rx="3" fill="#dd4a50"/><path d="M16 19h6" stroke="#fff" stroke-width="2"/></symbol>
<symbol id="sheet" viewBox="0 0 14 16"><rect x=".5" y=".5" width="13" height="15" rx="1" fill="#e2e2e2" stroke="#777"/><path d="M1 4.500h12" stroke="#777"/><path d="M2.500 2.500h4M8 2.500h4M2.500 7h4M8 7h4M2.500 10h4M8 10h4M2.500 13h4M8 13h4" stroke="#888"/></symbol>
<symbol id="mem" viewBox="0 0 24 24"><path d="M6 2v20M10 2v20M14 2v20M18 2v20" stroke="#777" stroke-width="2"/><rect x="2" y="6" width="20" height="12" rx="2" fill="#fff" stroke="#777" stroke-width="1.800"/></symbol>
<symbol id="hatch" viewBox="0 0 16 16"><path d="M1 1h14v14H1z" fill="#fff" stroke="#222" stroke-width="1.600"/><path d="M1 11L11 1M5 15L15 5" stroke="#333"/></symbol>
<symbol id="selexp" viewBox="0 0 24 24"><path d="M9 9h14v13H9z" fill="#fbe13f" stroke="#c7a916"/><text x="0" y="15" font-size="26" font-family="Liberation Serif, serif" font-weight="700" fill="#444">ε</text></symbol>
<symbol id="selall" viewBox="0 0 24 24"><path d="M2 2h20v5H2zM2 9.500h20v5H2zM2 17h20v5H2z" fill="#fbe13f" stroke="#c7a916"/></symbol>
<symbol id="inv" viewBox="0 0 24 24"><path d="M2 2l20 20H2z" fill="#fbe13f"/><path d="M2 2h20v20z" fill="#eee"/><path d="M2 2h20v20H2zl20 20" fill="none" stroke="#aaa"/></symbol>
<symbol id="top" viewBox="0 0 24 24"><path d="M1 2h22v20H1z" fill="#a5c6ea" stroke="#4676a8"/><path d="M2 16h20v5H2z" fill="#f2dc6c"/><path d="M12 4l5 5h-3v7h-4V9H7zM5 3h14" fill="#2f5c91" stroke="#2f5c91" stroke-width="1.500"/></symbol>
<symbol id="field" viewBox="0 0 24 24"><path d="M2 2h12v18H2z" fill="#ccc" stroke="#999"/><path d="M5 2v18M9 2v18" stroke="#999"/><use href="#star"/></symbol>
<symbol id="calc" viewBox="0 0 24 24"><path d="M2 2h19v20H2z" fill="#e8f0f8" stroke="#6890b8"/><path d="M2 2h8v20H2z" fill="#7ba6d3"/><path d="M7 22L18 2l4 2L11 22z" fill="#d3583b" stroke="#7c2f1d"/></symbol>
<symbol id="cond2" viewBox="0 0 24 24"><path d="M1 3h22v5H1z" fill="#999"/><path d="M1 10h22v5H1z" fill="#8bc79a"/><path d="M1 17h22v5H1z" fill="#ddd"/><path d="M13 5.500h8M13 12.500h8M3 19.500h5" stroke="#fff" stroke-width="2"/><path d="M2 19.500h6" stroke="#d55" stroke-width="2"/></symbol>
<symbol id="zact" viewBox="0 0 24 24"><circle cx="10" cy="10" r="8" fill="#b8d2ee" stroke="#5887ba" stroke-width="3.500" stroke-dasharray="4 1.500"/><path d="M8 6l7 4-7 4z" fill="#35608f"/><path d="M14 12l9 7-3 1 2 3-2 1-2-3-2 2z" fill="#fff" stroke="#666"/></symbol>
<symbol id="dock" viewBox="0 0 24 24"><path d="M6 2h17v13H6z" fill="#e8e8e8" stroke="#888"/><path d="M6 2h17v4H6z" fill="#7a9bc0"/><path d="M2 9h16v13H2z" fill="#f4f4f4" stroke="#888"/><path d="M2 9h16v4H2z" fill="#9ab4d0"/><path d="M4 16h12M4 19h12" stroke="#aaa"/></symbol>
<symbol id="form" viewBox="0 0 24 24"><path d="M2 2h20v20H2z" fill="#e3ecf6" stroke="#9db8d4"/><path d="M5 7h5M5 16h5" stroke="#556" stroke-width="2"/><path d="M13 5h6v5h-6zM13 14h6v5h-6z" fill="#fff" stroke="#7f9fc2"/></symbol>
</defs>
</svg>

<header class="titlebar">
  <span class="lights"><i></i><i></i><i></i></span>
  <h1>*UnitoAssyrianGovernance — QGIS</h1>
</header>

<nav class="toolrow" aria-label="Project and navigation">
  <span class="grip first"></span>
  <button class="tb" aria-label="New project"><svg><use href="#new"/></svg></button>
  <button class="tb" aria-label="Open project"><svg><use href="#open"/></svg></button>
  <button class="tb" aria-label="Save project"><svg><use href="#save"/></svg></button>
  <button class="tb" aria-label="New print layout"><svg><use href="#layout"/></svg></button>
  <button class="tb" aria-label="Layout manager"><svg><use href="#mgr"/></svg></button>
  <button class="tb" aria-label="Style manager"><svg><use href="#style"/></svg></button>
  <span class="grip"></span>
  <button class="tb" aria-label="Pan"><svg><use href="#hand"/></svg></button>
  <button class="tb" aria-label="Pan to selection"><svg><use href="#pan"/></svg></button>
  <button class="tb" aria-label="Zoom in"><svg><use href="#zin"/></svg></button>
  <button class="tb" aria-label="Zoom out"><svg><use href="#zout"/></svg></button>
  <button class="tb" aria-label="Zoom full"><svg><use href="#zfull"/></svg></button>
  <button class="tb" aria-label="Zoom to selection"><svg><use href="#zsel"/></svg></button>
  <button class="tb" aria-label="Zoom to layer"><svg><use href="#zlay"/></svg></button>
  <button class="tb" aria-label="Zoom to native resolution" disabled><svg><use href="#znat"/></svg></button>
  <button class="tb" aria-label="Zoom last"><svg><use href="#zlast"/></svg></button>
  <button class="tb" aria-label="Zoom next" disabled><svg><use href="#znext"/></svg></button>
  <button class="tb" aria-label="New map view"><svg><use href="#nmap"/></svg></button>
  <button class="tb" aria-label="New 3D view"><svg><use href="#n3d"/></svg></button>
  <button class="tb" aria-label="New bookmark"><svg><use href="#bm"/></svg></button>
  <button class="tb" aria-label="Show bookmarks"><svg><use href="#bms"/></svg></button>
  <button class="tb" aria-label="Temporal controller"><svg><use href="#clock"/></svg></button>
  <button class="tb" aria-label="Refresh"><svg><use href="#refresh"/></svg></button>
  <span class="space s24"></span>
  <span class="grip"></span>
  <button class="tb on" aria-label="Select features"><svg><use href="#sel"/></svg></button>
  <button class="drop on" aria-label="Select options"></button>
  <button class="tb" aria-label="Select by value"><svg><use href="#selval"/></svg></button>
  <button class="drop" aria-label="Select by value options"></button>
  <button class="tb" aria-label="Deselect"><svg><use href="#desel"/></svg></button>
  <button class="drop" aria-label="Deselect options"></button>
  <span class="space s6"></span>
  <button class="more">»</button>
  <span class="grip narrow"></span>
  <button class="tb" aria-label="Identify"><svg><use href="#ident"/></svg></button>
  <button class="tb" aria-label="Field calculator"><svg><use href="#abac"/></svg></button>
  <button class="tb" aria-label="Toolbox"><svg><use href="#gear"/></svg></button>
  <button class="tb" aria-label="Statistics"><svg><use href="#sigma"/></svg></button>
  <button class="tb" aria-label="Attribute table"><svg><use href="#tbl"/></svg></button>
  <button class="drop" aria-label="Attribute table options"></button>
  <button class="tb" aria-label="Measure"><svg><use href="#meas"/></svg></button>
  <button class="drop" aria-label="Measure options"></button>
  <button class="tb on" aria-label="Map tips"><svg><use href="#tip"/></svg></button>
  <button class="tb" aria-label="Run action" disabled><svg><use href="#act"/></svg></button>
  <button class="drop" aria-label="Action options"></button>
</nav>

<nav class="toolrow" aria-label="Data sources and editing">
  <span class="grip first"></span>
  <button class="tb" aria-label="Data source manager"><svg><use href="#dsm"/></svg></button>
  <button class="tb" aria-label="New GeoPackage layer"><svg><use href="#gpkg"/></svg></button>
  <button class="tb" aria-label="New shapefile layer"><svg><use href="#vnew"/></svg></button>
  <button class="tb" aria-label="New SpatiaLite layer"><svg><use href="#feath"/></svg></button>
  <button class="tb" aria-label="New scratch layer"><svg><use href="#chip"/></svg></button>
  <button class="tb" aria-label="New mesh layer"><svg><use href="#mesh"/></svg></button>
  <button class="tb" aria-label="New GPX layer"><svg><use href="#gpx"/></svg></button>
  <span class="grip"></span>
  <button class="tb menu" aria-label="Current edits" disabled><svg><use href="#pens"/></svg></button>
  <button class="tb" aria-label="Toggle editing"><svg><use href="#pen"/></svg></button>
  <button class="tb" aria-label="Save edits" disabled><svg><use href="#sedit"/></svg></button>
  <button class="tb" aria-label="Digitize shape" disabled><svg><use href="#poly"/></svg></button>
  <button class="drop" aria-label="Digitize options"></button>
  <button class="tb" aria-label="Add point" disabled><svg><use href="#pts"/></svg></button>
  <button class="tb" aria-label="Vertex tool" disabled><svg><use href="#vert"/></svg></button>
  <button class="drop" aria-label="Vertex options"></button>
  <button class="tb" aria-label="Modify attributes" disabled><svg><use href="#multi"/></svg></button>
  <button class="tb" aria-label="Delete selected" disabled><svg><use href="#trash"/></svg></button>
  <button class="tb" aria-label="Cut" disabled><svg><use href="#cut"/></svg></button>
  <button class="tb" aria-label="Copy"><svg><use href="#copy"/></svg></button>
  <button class="tb" aria-label="Paste" disabled><svg><use href="#paste"/></svg></button>
  <button class="tb" aria-label="Undo" disabled><svg><use href="#undo"/></svg></button>
  <button class="tb" aria-label="Redo" disabled><svg><use href="#redo"/></svg></button>
  <span class="grip narrow"></span>
  <button class="tb" aria-label="Layer labeling"><svg><use href="#tagy"/></svg></button>
  <button class="tb" aria-label="Layer diagrams"><svg><use href="#diag"/></svg></button>
  <span class="sep"></span>
  <button class="tb" aria-label="Highlight pinned labels"><svg><use href="#tagb"/></svg></button>
  <button class="tb" aria-label="Unplaced labels"><svg><use href="#tagr"/></svg></button>
  <span class="sep"></span>
  <button class="tb" aria-label="Pin labels"><svg><use href="#tagp"/></svg></button>
  <button class="tb" aria-label="Show or hide labels"><svg><use href="#tage"/></svg></button>
  <button class="tb" aria-label="Move label"><svg><use href="#tagm"/></svg></button>
  <button class="tb" aria-label="Rotate label"><svg><use href="#tagt"/></svg></button>
  <button class="tb" aria-label="Change label"><svg><use href="#tagc"/></svg></button>
  <span class="space s120"></span>
  <span class="grip"></span>
  <button class="tb" aria-label="DB manager"><svg><use href="#db"/></svg></button>
  <span class="space s6"></span>
  <span class="grip"></span>
  <button class="tb" aria-label="MetaSearch"><svg><use href="#globe"/></svg></button>
  <button class="more">»</button>
  <span class="grip narrow"></span>
  <button class="tb" aria-label="Python console"><svg><use href="#py"/></svg></button>
  <span class="space s12"></span>
  <span class="grip"></span>
</nav>

<nav class="toolrow" aria-label="Advanced digitizing and raster">
  <span class="grip first"></span>
  <button class="tb" aria-label="Advanced digitizing" disabled><svg><use href="#tri"/></svg></button>
  <button class="tb" aria-label="Move feature" disabled><svg><use href="#pts"/></svg></button>
  <button class="drop" aria-label="Move options"></button>
  <button class="tb" aria-label="Rotate feature" disabled><svg><use href="#bl1"/></svg></button>
  <button class="tb" aria-label="Scale feature" disabled><svg><use href="#bl2"/></svg></button>
  <button class="tb" aria-label="Simplify" disabled><svg><use href="#bl3"/></svg></button>
  <button class="tb" aria-label="Add ring" disabled><svg><use href="#bl4"/></svg></button>
  <button class="tb" aria-label="Add part" disabled><svg><use href="#bl5"/></svg></button>
  <button class="tb" aria-label="Fill ring" disabled><svg><use href="#bl4"/></svg></button>
  <button class="tb" aria-label="Delete ring" disabled><svg><use href="#bl6"/></svg></button>
  <button class="tb" aria-label="Delete part" disabled><svg><use href="#bl7"/></svg></button>
  <button class="tb" aria-label="Reshape" disabled><svg><use href="#resh"/></svg></button>
  <button class="tb" aria-label="Offset curve" disabled><svg><use href="#offs"/></svg></button>
  <button class="tb" aria-label="Reverse line" disabled><svg><use href="#simp"/></svg></button>
  <button class="tb" aria-label="Trim or extend" disabled><svg><use href="#trim"/></svg></button>
  <button class="tb" aria-label="Split features" disabled><svg><use href="#split"/></svg></button>
  <button class="tb" aria-label="Split parts" disabled><svg><use href="#split"/></svg></button>
  <button class="tb" aria-label="Merge features" disabled><svg><use href="#merge"/></svg></button>
  <button class="tb" aria-label="Merge attributes" disabled><svg><use href="#vm"/></svg></button>
  <button class="tb" aria-label="Rotate symbols" disabled><svg><use href="#rot"/></svg></button>
  <button class="drop" aria-label="Rotate options"></button>
  <span class="grip"></span>
  <button class="tb" aria-label="Local histogram stretch" disabled><svg><use href="#hist"/></svg></button>
  <button class="tb" aria-label="Full histogram stretch" disabled><svg><use href="#hist2"/></svg></button>
  <button class="tb" aria-label="Local cumulative cut" disabled><svg><use href="#hist"/></svg></button>
  <button class="tb" aria-label="Full cumulative cut" disabled><svg><use href="#hist2"/></svg></button>
  <button class="tb" aria-label="Increase brightness" disabled><svg><use href="#sunu"/></svg></button>
  <button class="tb" aria-label="Decrease brightness" disabled><svg><use href="#sund"/></svg></button>
  <button class="tb" aria-label="Increase contrast" disabled><svg><use href="#conu"/></svg></button>
  <button class="tb" aria-label="Decrease contrast" disabled><svg><use href="#cond"/></svg></button>
  <button class="tb" aria-label="Increase gamma" disabled><svg><use href="#gamu"/></svg></button>
  <button class="tb" aria-label="Decrease gamma" disabled><svg><use href="#gamd"/></svg></button>
  <span class="grip"></span>
  <button class="tb" aria-label="Circular string" disabled><svg><use href="#arc"/></svg></button>
  <button class="tb" aria-label="Add circle" disabled><svg><use href="#circ"/></svg></button>
  <button class="drop" aria-label="Circle options"></button>
  <button class="tb" aria-label="Add ellipse" disabled><svg><use href="#elli"/></svg></button>
  <button class="drop" aria-label="Ellipse options"></button>
  <button class="tb" aria-label="Add rectangle" disabled><svg><use href="#rect"/></svg></button>
  <button class="drop" aria-label="Rectangle options"></button>
  <button class="tb" aria-label="Add regular polygon" disabled><svg><use href="#hexa"/></svg></button>
  <button class="drop" aria-label="Polygon options"></button>
</nav>

<nav class="toolrow" aria-label="Snapping and plugins">
  <span class="grip first"></span>
  <button class="tb on" aria-label="Enable snapping"><svg><use href="#magnet"/></svg></button>
  <button class="tb menu" aria-label="Snapping layers"><svg><use href="#vsnap"/></svg></button>
  <button class="tb on menu" aria-label="Snapping type"><svg><use href="#dots3"/></svg></button>
  <span class="spin tol"><input type="text" value="100" aria-label="Tolerance"><button class="clear" aria-label="Clear">×</button><span class="steps"><button aria-label="Up"></button><button aria-label="Down"></button></span></span>
  <span class="combo unit"><select aria-label="Units"><option>px</option></select></span>
  <button class="tb" aria-label="Topological editing"><svg><use href="#topo"/></svg></button>
  <button class="tb menu" aria-label="Avoid overlap"><svg><use href="#over"/></svg></button>
  <button class="tb" aria-label="Snap on intersection"><svg><use href="#inter"/></svg></button>
  <button class="tb" aria-label="Tracing"><svg><use href="#bolt"/></svg></button>
  <button class="drop" aria-label="Tracing options"></button>
  <button class="tb" aria-label="Self snapping"><svg><use href="#trace"/></svg></button>
  <span class="grip"></span>
  <button class="chip ad">AD</button>
  <button class="chip mg">MG</button>
  <button class="chip rd">RD</button>
  <span class="spin num"><input type="text" value="0,000" aria-label="Value"><span class="steps"><button aria-label="Up"></button><button aria-label="Down"></button></span></span>
  <button class="chip sc">SC</button>
  <button class="chip adj">ADJ</button>
  <button class="chip blank" aria-label="Blank"></button>
  <button class="chip tm">T-</button>
  <button class="chip tp">T+</button>
  <button class="chip tt">TT</button>
  <button class="chip un" aria-label="Undo"><svg><use href="#undo"/></svg></button>
  <span class="space s24"></span>
  <span class="grip"></span>
  <button class="tb" aria-label="Cloud"><svg><use href="#cloud"/></svg></button>
  <button class="tb" aria-label="Cloud sync" disabled><svg><use href="#cloud2"/></svg></button>
  <span class="sep"></span>
  <button class="tb" aria-label="Package import"><svg><use href="#boxd"/></svg></button>
  <button class="tb" aria-label="Package export"><svg><use href="#boxu"/></svg></button>
  <button class="tb" aria-label="Plugin settings"><svg><use href="#tools"/></svg></button>
  <span class="grip"></span>
  <button class="tb" aria-label="Spectral plot"><svg><use href="#spec"/></svg></button>
  <span class="grip"></span>
  <button class="tb" aria-label="Classification"><svg><use href="#scp"/></svg></button>
  <button class="tb" aria-label="Zoom to image"><svg><use href="#bandz"/></svg></button>
  <label class="dark rgb"><input type="radio" name="preview" checked>RGB =</label>
  <span class="combo band"><select aria-label="RGB bands"><option>–</option></select></span>
  <button class="tb" aria-label="Cumulative cut stretch"><svg><use href="#pct"/></svg></button>
  <button class="tb" aria-label="Standard deviation stretch"><svg><use href="#sig"/></svg></button>
  <button class="tb" aria-label="Zoom to ROI"><svg><use href="#roiz"/></svg></button>
  <label class="dark roi"><input type="radio" name="roi" checked>ROI</label>
  <button class="tb" aria-label="Create ROI polygon"><svg><use href="#roip"/></svg></button>
  <button class="tb" aria-label="Activate ROI pointer"><svg><use href="#roia"/></svg></button>
  <button class="tb" aria-label="Redo ROI" disabled><svg><use href="#redor"/></svg></button>
  <span class="dist">Dist</span>
  <span class="fill"></span>
  <button class="more">»</button>
  <span class="grip narrow"></span>
  <button class="tb" aria-label="Profile"><svg><use href="#prof"/></svg></button>
  <button class="more end">»</button>
</nav>

<main class="workspace">
  <section class="layers">
    <div class="panelhead"><h2>Layers</h2><button aria-label="Float"><svg viewBox="0 0 12 12"><path d="M5 2h5v5H5zM2 5h5v5H2z"/></svg></button><button aria-label="Close"><svg viewBox="0 0 12 12"><path d="M3 3l6 6M9 3l-6 6" stroke-width="2.500"/></svg></button></div>
    <div class="paneltools">
      <button aria-label="Styling"><svg><use href="#brush"/></svg></button>
      <button aria-label="Add group"><svg><use href="#addg"/></svg></button>
      <button class="on menu" aria-label="Map themes"><svg><use href="#eye"/></svg></button>
      <button class="menu" aria-label="Filter legend"><svg><use href="#filt"/></svg></button>
      <button aria-label="Filter by expression"><svg><use href="#eps"/></svg></button>
      <button class="drop" aria-label="Expression options"></button>
      <button aria-label="Expand all"><svg><use href="#exp"/></svg></button>
      <button aria-label="Collapse all"><svg><use href="#col"/></svg></button>
      <button aria-label="Remove layer"><svg><use href="#rem"/></svg></button>
    </div>
    <ul class="tree">
      <li class="l0"><svg class="ic"><use href="#sheet"/></svg><b>Unique values</b><svg class="mem"><use href="#mem"/></svg></li>
      <li class="l1 shut"><label><input type="checkbox"><svg class="ic"><use href="#grp"/></svg>ANE</label></li>
      <li class="l1 shut"><label><input type="checkbox" checked><svg class="ic"><use href="#grp"/></svg>nerd_clipped</label></li>
      <li class="l1"><label><input type="checkbox"><svg class="ic"><use href="#grp"/></svg>ASI-Philistia</label></li>
      <li class="l1 shut"><label><input type="checkbox"><svg class="ic"><use href="#grp"/></svg>archeofoss</label></li>
      <li class="l1 shut"><label><input type="checkbox"><svg class="ic"><use href="#grp"/></svg>ASI-Judah</label></li>
      <li class="l1 shut"><label><input type="checkbox"><svg class="ic"><use href="#grp"/></svg>ASI-Israel</label></li>
      <li class="l1 shut"><label><input type="checkbox"><svg class="ic"><use href="#grp"/></svg>ASI gpkg</label></li>
      <li class="l1 open"><label><input type="checkbox" checked><svg class="ic"><use href="#grp"/></svg>kart_gpkg</label></li>
      <li class="l2"><label><input type="checkbox"><svg class="ic"><use href="#hatch"/></svg><em>archaeo_survey_areas</em></label></li>
      <li class="l2 open current"><label><input type="checkbox" checked><svg class="ic faint"><use href="#dots3"/></svg><b>archaeo_sites</b></label></li>
      <li class="l3"><label><input type="checkbox" checked><i class="dot yellow"></i>Manasseh Hill Survey</label></li>
      <li class="l3"><label><input type="checkbox" checked><i class="dot red"></i>Samaria Survey</label></li>
      <li class="l3"><label><input type="checkbox"><i class="dot"></i>Kloner 2000</label></li>
      <li class="l3"><label><input type="checkbox" checked aria-label="Other"><i class="dot"></i></label></li>
      <li class="lt"><svg class="ic"><use href="#sheet"/></svg><b>archaeo_periodisation</b></li>
      <li class="lt"><svg class="ic"><use href="#sheet"/></svg><b>archaeo_sizequality</b></li>
      <li class="lt"><svg class="ic"><use href="#sheet"/></svg><b>archaeo_locationquality</b></li>
      <li class="lt"><svg class="ic"><use href="#sheet"/></svg><b>archaeo_references</b></li>
      <li class="lt"><svg class="ic"><use href="#sheet"/></svg><b>context_administration</b></li>
      <li class="lt"><svg class="ic"><use href="#sheet"/></svg><b>archaeo_sitetype</b></li>
      <li class="lt"><svg class="ic"><use href="#sheet"/></svg><b>archaeo_sitesubtype</b></li>
      <li class="lt"><svg class="ic"><use href="#sheet"/></svg><b>archaeo_sitemorphology</b></li>
      <li class="lt"><svg class="ic"><use href="#sheet"/></svg><b>archaeo_status</b></li>
    </ul>
  </section>
  <div class="splitter"></div>
  <svg class="map" viewBox="471 181 1440 532" preserveAspectRatio="xMinYMin slice" role="img" aria-label="Map canvas">
    <defs>
      <linearGradient id="plain" x1="0" x2="1"><stop offset="0" stop-color="#6c6f3a"/><stop offset=".35" stop-color="#66803f"/><stop offset=".62" stop-color="#549048"/><stop offset=".85" stop-color="#469f4c"/><stop offset="1" stop-color="#3aa063"/></linearGradient>
      <filter id="soft" x="-5%" y="-5%" width="110%" height="110%"><feGaussianBlur stdDeviation="20 28"/></filter>
      <filter id="rough" x="-5%" y="-5%" width="110%" height="110%" color-interpolation-filters="sRGB"><feGaussianBlur stdDeviation="9 13" result="b"/><feTurbulence type="fractalNoise" baseFrequency=".014 .010" numOctaves="4" seed="8" result="n"/><feDisplacementMap in="b" in2="n" scale="110" xChannelSelector="R" yChannelSelector="G"/><feGaussianBlur stdDeviation="2 3"/></filter>
      <filter id="relief" x="0" y="0" width="100%" height="100%" color-interpolation-filters="sRGB"><feTurbulence type="fractalNoise" baseFrequency=".0110 .0065" numOctaves="4" seed="21"/><feColorMatrix values="0 0 0 0 0 0 0 0 0 0 0 0 0 0 0 1 0 0 0 0"/><feGaussianBlur stdDeviation="2 3"/><feDiffuseLighting surfaceScale="22" diffuseConstant=".720" lighting-color="#fff"><feDistantLight azimuth="215" elevation="45"/></feDiffuseLighting></filter>
      <clipPath id="land"><path d="M10 12H1508L1538 250 1363 1568H10z"/></clipPath>
      <path id="sites" d="M669 201h0M683 189h0M732 219h0M410 260h0M410 337h0M394 358h0M153 397h0M72 418h0M528 438h0M410 476h0M250 515h0M571 556h0M699 358h0M747 476h0M827 459h0M844 405h0M877 399h0M931 462h0M848 497h0M850 533h0M846 595h0M834 630h0M1052 358h0M1149 417h0M1188 388h0M1085 497h0M1178 497h0M1213 497h0M1254 495h0M1201 571h0M1219 612h0M1178 651h0M1236 260h0M1327 238h0M1341 187h0M1391 235h0M1391 290h0M1393 124h0M1407 113h0M1019 731h0M1019 772h0M924 772h0M891 890h0M1232 967h0M153 751h0M89 763h0M153 855h0M122 1047h0M72 1207h0M89 1343h0M136 1343h0M47 1423h0M344 1423h0M233 1482h0M297 1482h0M489 1503h0M567 1361h0M602 1299h0M712 1387h0M105 1562h0M749 1562h0"/>
    </defs>
    <path d="M471 181h1440v532H471z" fill="#1dbef2"/>
    <g transform="translate(465 176) scale(.4847 .3381)">
      <g clip-path="url(#land)">
        <path d="M0 0H1568V1600H0z" fill="#aca8a6"/>
        <g filter="url(#rough)">
          <path d="M740 275L860 140 1000 80 1160 -50H1700V1700H560L620 1450 680 1230 540 1280 400 1160 400 960 300 960 130 960 -60 920V400L100 430 200 510 290 610 400 580 500 640 560 730 700 760 830 740 850 650 950 500 980 400 930 345 780 330z" fill="#6b5530"/>
        </g>
        <g filter="url(#soft)">
          <path d="M1440 0H1700V1600H850L880 1300 860 1080 920 940 1020 720 1080 560 1250 470 1300 340 1420 250z" fill="url(#plain)"/>
          <path d="M1450 0h150L1400 1600h-130L1400 1000 1460 400z" fill="#3aa05c"/>
          <path d="M1310 560L1440 350 1420 700 1300 950 1150 1000 1120 850z" fill="#4da44b"/>
          <path d="M1000 420L1200 380 1240 560 1100 640 1020 800 950 900 1000 600z" fill="#6a6334"/>
        </g>
        <g filter="url(#rough)">
          <path d="M950 100L1060 110 1180 250 1080 330 960 230z" fill="#9a7436"/>
          <path d="M1200 30H1370V200L1300 260 1250 180z" fill="#82793c"/>
          <path d="M770 240L940 230 1060 270 1170 310 1200 390 1130 400 1030 370 960 340 800 310z" fill="#d39f50"/>
          <path d="M800 300L900 320 970 360 960 390 880 370z" fill="#d8a385"/>
          <path d="M520 290L600 275 740 290 700 340 560 320zM730 400L800 350 930 370 900 410 760 420z" fill="#cac6c5"/>
          <path d="M10 430L80 440 180 520 260 650 220 660 100 560 20 500z" fill="#b0874a"/>
          <path d="M70 470L180 600 250 700 250 800 150 800 120 650z" fill="#8f8c49"/>
          <path d="M310 620L400 600 560 760 540 800 400 690zM30 700L90 740 80 830 20 840z" fill="#a57846"/>
          <path d="M350 740L480 830 520 900 440 940 370 850z" fill="#7c8c46"/>
          <path d="M130 790L370 810 400 900 200 880z" fill="#b4ad5c"/>
          <path d="M10 880L140 840 200 880 350 890 390 970 300 965 180 950 60 960z" fill="#cb9868"/>
          <path d="M240 850L360 810 380 870 290 890z" fill="#cfce76"/>
          <path d="M420 1040L460 980 570 935 700 970 800 955 900 1010 1000 1050 1090 1000 1180 950 1130 1040 1070 1090 950 1100 850 1070 760 1120 560 1080z" fill="#8fcb66"/>
          <path d="M380 1110L420 1030 500 1010 570 1060 760 1020 790 1070 700 1180 640 1250 540 1280 470 1240 400 1180z" fill="#d5a25e"/>
          <path d="M560 1130L610 1060 720 1030 790 1010 760 1080 600 1160z" fill="#e4d06c"/>
          <path d="M430 1050L520 980 610 980 590 1040 460 1080z" fill="#d0d46c"/>
          <path d="M1000 1060L1110 1000 1170 955 1110 1050 1040 1085z" fill="#82e070"/>
          <path d="M420 1200L640 1200 560 1275 470 1260z" fill="#d29b7a"/>
          <g fill="#050402">
            <path d="M685 275L725 190 770 110 810 115 780 190 850 60 920 35 1010 45 1020 80 960 105 900 110 800 200 750 240z"/>
            <path d="M1000 440L995 520 900 700 850 770 830 740 850 620 930 530z"/>
            <path d="M550 710L620 730 830 670 850 740 790 770 700 810 640 760 560 800z"/>
            <path d="M-60 350L100 375 150 430 100 440 -60 420zM150 440L270 560 260 590 140 460zM260 560L380 530 380 600 290 660z"/>
            <path d="M430 620L500 650 500 680 430 650zM-60 570L40 620 50 730 30 830 -60 840zM80 490L120 640 135 800 110 790 90 620z"/>
            <path d="M-60 940L70 950 60 1000 20 1030 -60 1030zM260 1100L300 1000 360 950 390 1010 370 1080 350 1130 300 1090zM370 1150L405 1160 410 1220 380 1220z"/>
            <path d="M490 1650L540 1470 590 1440 620 1330 670 1240 730 1200 660 1330 620 1470 580 1650zM870 860L950 720 990 650 975 730 920 820z"/>
            <path d="M920 400L960 370 980 410 940 420zM700 940L780 890 830 910 780 960 720 990z" opacity=".8"/>
          </g>
          <g fill="#17150a" opacity=".55">
            <path d="M520 870L700 880 860 930 930 1010 850 990 700 950 540 940zM1050 240L1200 270 1310 330 1240 340 1080 280zM1390 80L1430 60 1420 150 1330 260 1300 250 1380 150zM1190 500L1260 390 1270 440 1210 540z"/>
            <path d="M560 790L700 830 860 790 850 860 700 900 540 880zM820 1130L850 1120 840 1300 790 1500 760 1480 800 1330z"/>
            <path d="M600 1568L660 1380 780 1250 720 1568zM1130 60L1220 30 1200 170 1150 140zM250 620L330 640 330 740 270 720zM1170 1000L1200 1020 1190 1090 1170 1060z" opacity=".6"/>
            <path d="M1200 1240L1290 1130 1260 1210zM1330 1220L1430 1080 1420 1120z" opacity=".6"/>
          </g>
        </g>
        <path d="M0 0H1568V1600H0z" filter="url(#relief)" class="shade"/>
      </g>
      <path d="M1508 12L1538 250 1363 1568" class="coast"/>
      <use href="#sites" class="halo"/>
      <use href="#sites" class="core"/>
      <path class="halo" d="M1166 793h0"/><path class="core hot" d="M1166 793h0"/>
      <path class="ring" d="M1009 1228h0"/><path class="pin" d="M1009 1228h0"/>
    </g>
    <text x="1507" y="614" class="sea">Dead Sea</text>
  </svg>
</main>

<section class="window">
  <header class="wtitle"><span class="lights"><i></i><i></i><i></i></span><h2>archaeo_sites — Features Total: 11331, Filtered: 11331, Selected: 3</h2></header>
  <div class="wtools">
    <button aria-label="Toggle editing"><svg><use href="#pen"/></svg></button>
    <button aria-label="Multi edit" disabled><svg><use href="#multi"/></svg></button>
    <button aria-label="Save edits" disabled><svg><use href="#sedit"/></svg></button>
    <button aria-label="Reload"><svg><use href="#refresh"/></svg></button>
    <span class="sep"></span>
    <button class="menu" aria-label="Add feature" disabled><svg><use href="#multi"/></svg></button>
    <button aria-label="Delete selected" disabled><svg><use href="#trash"/></svg></button>
    <button aria-label="Cut" disabled><svg><use href="#cut"/></svg></button>
    <button aria-label="Copy"><svg><use href="#copy"/></svg></button>
    <button aria-label="Paste" disabled><svg><use href="#paste"/></svg></button>
    <span class="sep"></span>
    <button aria-label="Select by expression"><svg><use href="#selexp"/></svg></button>
    <button aria-label="Select all"><svg><use href="#selall"/></svg></button>
    <button aria-label="Invert selection"><svg><use href="#inv"/></svg></button>
    <button aria-label="Deselect all"><svg><use href="#desel"/></svg></button>
    <button aria-label="Filter"><svg><use href="#filt"/></svg></button>
    <button class="on" aria-label="Move selection to top"><svg><use href="#top"/></svg></button>
    <button aria-label="Pan to rows"><svg><use href="#pan"/></svg></button>
    <button aria-label="Zoom to rows"><svg><use href="#zsel"/></svg></button>
    <span class="sep"></span>
    <button aria-label="New field" disabled><svg><use href="#field"/></svg></button>
    <button aria-label="Delete field" disabled><svg><use href="#field"/></svg></button>
    <button aria-label="Organize columns"><svg><use href="#calc"/></svg></button>
    <button aria-label="Field calculator"><svg><use href="#abac"/></svg></button>
    <span class="sep"></span>
    <button aria-label="Conditional formatting"><svg><use href="#cond2"/></svg></button>
    <span class="sep"></span>
    <button aria-label="Actions"><svg><use href="#zact"/></svg></button>
    <button aria-label="Dock table"><svg><use href="#dock"/></svg></button>
  </div>
  <div class="gridbox">
    <div class="viewport">
      <table>
        <colgroup><col class="c43"><col class="c55"><col class="c301"><col class="c179"><col class="c109"><col class="c208"><col class="c100"><col class="c314"><col class="c100"><col class="c100"><col class="c174"><col class="c100"><col class="c100"><col></colgroup>
        <thead><tr><th></th><th class="sorted">fid</th><th>Name</th><th>NameAlt</th><th>AncientName</th><th>Type</th><th>Morphology</th><th>Period</th><th>StartDate</th><th>EndDate</th><th>ArchaeoStatus</th><th>Latitude</th><th>Longitude</th><th></th></tr></thead>
        <tbody>
          <tr class="picked"><th>1</th><td class="n">13170</td><td>Tel Goren</td><td>NA</td><td>NA</td><td>Settlement</td><td>Mound/Tell</td><td>Iron Age I-II</td><td class="n">-1150</td><td class="n">-586</td><td>Surveyed</td><td class="n null">NULL</td><td class="n null">NULL</td><td></td></tr>
          <tr class="picked"><th>2</th><td class="n">13171</td><td>Tel Goren</td><td>NA</td><td>NA</td><td>Settlement</td><td>Mound/Tell</td><td>Hellenistic</td><td class="n">-332</td><td class="n">-63</td><td>Surveyed</td><td class="n null">NULL</td><td class="n null">NULL</td><td></td></tr>
          <tr class="picked"><th>3</th><td class="n">13172</td><td>Tel Goren</td><td>NA</td><td>NA</td><td>Settlement</td><td>Mound/Tell</td><td>Roman</td><td class="n">-63</td><td class="n">324</td><td>Surveyed</td><td class="n null">NULL</td><td class="n null">NULL</td><td></td></tr>
          <tr class="alt"><th>4</th><td class="n">1</td><td>Elevation Point 577</td><td class="null">NULL</td><td class="null">NULL</td><td>Settlement</td><td>Flat site …</td><td>Late Roman</td><td class="n">70</td><td class="n">324</td><td>Surveyed</td><td class="n null">NULL</td><td class="n null">NULL</td><td></td></tr>
          <tr><th>5</th><td class="n">2</td><td>Elevation Point 577</td><td class="null">NULL</td><td class="null">NULL</td><td>Settlement</td><td>Flat site …</td><td>Iron Age I</td><td class="n">-1150</td><td class="n">-950</td><td>Surveyed</td><td class="n null">NULL</td><td class="n null">NULL</td><td></td></tr>
          <tr class="alt"><th>6</th><td class="n">3</td><td>Zuhur el-Museif</td><td class="null">NULL</td><td class="null">NULL</td><td>Settlement</td><td>Flat site</td><td>Late Roman-Byzantine</td><td class="n">70</td><td class="n">324</td><td>Surveyed</td><td class="n null">NULL</td><td class="n null">NULL</td><td></td></tr>
          <tr><th>7</th><td class="n">4</td><td>Elevation Point 427</td><td class="null">NULL</td><td class="null">NULL</td><td>Settlement</td><td>Flat site</td><td>Iron Age IIa-b</td><td class="n">-950</td><td class="n">-680</td><td>Surveyed</td><td class="n null">NULL</td><td class="n null">NULL</td><td></td></tr>
          <tr class="alt"><th></th><td></td><td></td><td></td><td></td><td></td><td></td><td></td><td></td><td></td><td></td><td></td><td></td><td></td></tr>
        </tbody>
      </table>
    </div>
    <div class="vbar"><button class="up" aria-label="Scroll up"></button><span class="thumb"></span><span class="track"></span><button class="down" aria-label="Scroll down"></button></div>
    <div class="hbar"><button class="left" aria-label="Scroll left"></button><span class="thumb"></span><span class="track"></span><button class="right" aria-label="Scroll right"></button></div>
    <div class="corner"></div>
  </div>
  <footer class="wfoot">
    <button class="show menu"><svg><use href="#tbl"/></svg>Show All Features</button>
    <span class="fill"></span>
    <button class="view" aria-label="Form view"><svg><use href="#form"/></svg></button>
    <button class="view on" aria-label="Table view"><svg><use href="#tbl"/></svg></button>
  </footer>
</section>
</body>
</html>
```
FILE: styles.css
```css
* { box-sizing: border-box; }
body {
  margin: 0;
  height: 100vh;
  display: flex;
  flex-direction: column;
  overflow: hidden;
  background: #1dbef2;
  color: #222;
  font: 13px/19px "DejaVu Sans Mono", monospace;
}
.defs { position: absolute; width: 0; height: 0; }
button, input, select { font: inherit; color: inherit; }
button {
  position: relative;
  flex: none;
  display: flex;
  align-items: center;
  justify-content: center;
  padding: 0;
  border: 1px solid transparent;
  border-radius: 2px;
  background: none;
}
button:disabled svg { opacity: .35; filter: grayscale(1); }
h1, h2 { margin: 0; font-size: 13px; font-weight: 400; }
.fill { flex: 1; }

/* Title bars */
.titlebar, .wtitle {
  flex: none;
  display: grid;
  grid-template-columns: 1fr auto 1fr;
  align-items: center;
  background: #e2e2e2;
  border-bottom: 1px solid #c6c6c6;
}
.titlebar { height: 24px; padding: 0 3px 4px; }
.titlebar h1, .wtitle h2 { font-family: Inter, sans-serif; font-weight: 600; color: #a0a0a0; }
.wtitle h2 { font-weight: 700; }
.lights { display: flex; gap: 8px; }
.lights i { width: 12px; height: 12px; border-radius: 50%; background: #c3c3c3; border: 1px solid #adadad; }

/* Tool rows */
.toolrow {
  flex: none;
  height: 39px;
  display: flex;
  align-items: center;
  background: linear-gradient(#f6f6f6, #ececec);
  border-bottom: 1px solid #b2b2b2;
}
.tb { width: 33px; height: 32px; }
.tb svg { width: 24px; height: 24px; }
.tb.on, .drop.on, .wtools .on, .view.on { background: #d6d6d6; border-color: #a9a9a9; }
.drop { width: 12px; height: 32px; }
.drop::after, .menu::after {
  content: "";
  border: 4px solid transparent;
  border-top: 5px solid #444;
  border-bottom: 0;
}
.menu::after { position: absolute; right: 1px; bottom: 4px; border-width: 3px 3px 0; }
.grip { flex: none; width: 17px; height: 18px; padding: 0 4px 0 7px; background: radial-gradient(circle, #a8a8a8 1px, transparent 1px) 0 0 / 3px 3px content-box; }
.grip.first { width: 7px; padding: 0 3px 0 0; }
.grip.narrow { width: 13px; padding: 0 5px 0 2px; }
.sep { flex: none; width: 7px; height: 20px; border-left: 1px solid #cfcfcf; }
.toolrow .sep { height: 28px; }
.space { flex: none; }
.s6 { width: 6px; }
.s12 { width: 12px; }
.s24 { width: 24px; }
.s120 { width: 120px; }
.more { width: 17px; height: 32px; font-family: "Open Sans", sans-serif; font-size: 16px; color: #333; }
.more.end { width: 12px; }

.spin { flex: none; display: flex; height: 24px; background: #fff; border: 1px solid #aaa; border-radius: 2px; }
.spin input { flex: 1; min-width: 0; border: 0; padding: 0 4px; background: none; outline: 0; }
.tol { width: 102px; }
.num { width: 94px; color: #888; margin: 0 1px; }
.clear { width: 13px; height: 10px; align-self: center; margin-right: 10px; background: #8b8b8b; color: #fff; font-size: 12px; line-height: 8px; }
.steps { width: 14px; display: flex; flex-direction: column; border-left: 1px solid #aaa; background: #f4f4f4; }
.steps button { flex: 1; }
.steps button::after { content: ""; border: 4px solid transparent; border-bottom: 5px solid #444; border-top: 0; }
.steps button:last-child::after { transform: rotate(180deg); }
.combo { flex: none; position: relative; display: flex; height: 24px; margin-left: 1px; }
.combo select { width: 100%; appearance: none; padding: 0 4px; border: 1px solid #aaa; border-radius: 2px; background: linear-gradient(#fff, #f3f3f3); }
.combo::after { content: ""; position: absolute; right: 7px; top: 10px; border: 4px solid transparent; border-top: 5px solid #444; border-bottom: 0; }
.unit { width: 100px; }
.band { width: 80px; margin-right: 1px; }
.band select { background: linear-gradient(90deg, #fff 58px, #aaa 58px, #aaa 59px, #f4f4f4 59px); }

.chip { width: 24px; height: 24px; margin: 0 5px 0 4px; border: 0; border-radius: 0; font-weight: 700; font-size: 12px; }
.chip svg { width: 24px; height: 24px; }
.ad { background: #fdb6c1; color: #e11; }
.mg { background: #dfe5df; color: #ccd4cc; }
.rd { background: #958e97; color: #aea8ae; }
.sc { background: #ccd0ba; color: #b5baa0; }
.adj { background: #a9a2a6; color: #e3dfe1; }
.blank { background: #cbd1d1; }
.tm { background: none; color: #888; }
.tp { background: #8d8d8d; color: #fff; }
.tt { background: #d5d9c6; color: #c3c9ae; }
.un { background: #9298a0; }
.un svg { opacity: .6; filter: brightness(1.4); }
.dark { flex: none; display: flex; align-items: center; gap: 6px; height: 23px; background: #626262; color: #fff; }
.dark input { appearance: none; width: 14px; height: 14px; margin: 0; border-radius: 50%; border: 4px solid #4c4c4c; background: #aaa; }
.rgb { width: 72px; }
.roi { width: 88px; }
.dist { flex: none; width: 26px; height: 18px; padding-left: 3px; overflow: hidden; background: #454545; color: #fff; font: 13px/18px "Liberation Sans", sans-serif; }

/* Layers panel */
.workspace { flex: 1; min-height: 0; display: flex; background: #ececec; }
.layers { flex: none; width: 464px; display: flex; flex-direction: column; min-height: 0; }
.panelhead { flex: none; display: flex; align-items: center; gap: 3px; height: 19px; padding: 0 2px 0 0; }
.panelhead h2 { flex: 1; }
.panelhead button { width: 11px; height: 11px; border-color: #666; }
.panelhead svg { width: 10px; height: 10px; fill: none; stroke: #555; }
.paneltools { flex: none; display: flex; align-items: center; height: 31px; }
.paneltools button { width: 24px; height: 23px; margin-right: 1px; }
.paneltools svg { width: 16px; height: 16px; }
.paneltools .drop { width: 14px; }
.paneltools .on { background: #f8f8f8; border-color: #aaa; }
.tree { flex: 1; min-height: 0; overflow: hidden; margin: 0; padding: 0; list-style: none; background: #fff; border: 1px solid #b4b4b4; border-left: 0; }
.tree li, .tree label { display: flex; align-items: center; height: 19px; white-space: nowrap; }
.tree li.l3, .tree .l3 label { height: 22px; }
.tree li::before { content: ""; flex: none; width: 0; height: 0; margin: 0 4px 0 3px; border: 4px solid transparent; }
.tree .shut::before { border-left: 5px solid #555; border-right: 0; margin-right: 7px; }
.tree .open::before { border-top: 5px solid #555; border-bottom: 0; }
.l0 { padding-left: 5px; }
.l1 { padding-left: 1px; }
.l1 label { padding-left: 3px; }
.l2 { padding-left: 20px; }
.l2 label { padding-left: 4px; }
.l3 { padding-left: 44px; }
.lt { padding-left: 25px; }
.ic { flex: none; width: 14px; height: 16px; margin-right: 7px; }
.l2 .ic { width: 16px; margin-right: 6px; }
.faint { opacity: .6; }
.mem { width: 18px; height: 18px; margin-left: auto; margin-right: 5px; border: 1px solid #e2e2e2; }
.tree input { appearance: none; flex: none; width: 14px; height: 14px; margin: 0 7px 0 0; border: 1px solid #b8b8b8; background: #fff; display: flex; justify-content: center; }
.l2 input { margin-right: 6px; }
.tree input:checked::after { content: ""; width: 5px; height: 9px; border: solid #222; border-width: 0 2px 2px 0; transform: rotate(35deg); }
.tree em { font-weight: 700; color: #8a8a8a; }
.current { background: #dedede; }
.current b { color: #000; text-decoration: underline; }
.dot { width: 8px; height: 8px; margin: 0 12px 0 5px; border: 1px solid #333; border-radius: 50%; background: #8a80d0; }
.yellow { background: #ecd83c; }
.red { background: #c8564c; }
.splitter { flex: none; width: 7px; background: #ececec; border-right: 1px solid #bbb; }

/* Map canvas */
.map { flex: 1; min-width: 0; height: 100%; display: block; }
.shade { mix-blend-mode: soft-light; opacity: .8; }
#sites, .coast, .halo, .core, .ring, .pin { fill: none; vector-effect: non-scaling-stroke; stroke-linecap: round; }
.coast { stroke: #f4f8f4; stroke-width: 1px; }
.halo { stroke: #28264e; stroke-width: 8px; }
.core { stroke: #8c84d8; stroke-width: 6px; }
.hot { stroke: #fff200; }
.ring { stroke: #fff; stroke-width: 10px; }
.pin { stroke: #000; stroke-width: 6px; }
.sea { font: 14px "Liberation Serif", serif; fill: #2c4d66; }

/* Attribute table window */
.window {
  flex: none;
  position: relative;
  margin: -10px 2px 0 0;
  background: #ececec;
  border-radius: 10px 10px 0 0;
  overflow: hidden;
  border-top: 1px solid #f6f6f6;
  box-shadow: 0 0 8px #0006;
}
.wtitle { height: 28px; padding: 0 0 0 9px; }
.wtools { display: flex; align-items: center; height: 31px; padding: 0 0 3px 3px; }
.wtools button { width: 25px; height: 28px; }
.wtools svg { width: 18px; height: 18px; }
.gridbox { display: grid; grid-template-columns: 1fr 15px; padding: 0 0 0 2px; border-top: 1px solid #b8b8b8; }
.viewport { height: 236px; overflow: hidden; background: #fff; }
table { width: 100%; table-layout: fixed; border-spacing: 0; color: #222; }
th, td { height: 30px; padding: 0 3px; border: solid #c4c4c4; border-width: 0 1px 1px 0; font-weight: 400; line-height: 18px; text-align: left; white-space: nowrap; overflow: hidden; }
td { padding-bottom: 2px; }
thead th { height: 21px; text-align: center; color: #000; background: linear-gradient(#fafafa, #eee); border-bottom-color: #aaa; }
tbody th { background: linear-gradient(#fafafa, #ededed); border-color: #a8a8a8; }
thead .sorted { padding-right: 2px; text-align: right; }
.sorted::after { content: ""; display: inline-block; margin: 0 2px 3px 10px; border: 4px solid transparent; border-bottom: 4px solid #444; border-top: 0; }
.n { text-align: right; }
.alt td { background: #f4f4f4; }
.null { font-style: italic; color: #888; }
.picked td { background: #b1d6ff; color: #000; }
.c43 { width: 43px; }
.c55 { width: 55px; }
.c301 { width: 301px; }
.c179 { width: 179px; }
.c109 { width: 109px; }
.c208 { width: 208px; }
.c100 { width: 100px; }
.c314 { width: 314px; }
.c174 { width: 174px; }
.vbar, .hbar { display: flex; background: #e2e2e2; }
.vbar { flex-direction: column; }
.hbar { height: 15px; border: solid #b4b4b4; border-width: 1px 0; }
.track { flex: 1; }
.vbar .thumb { height: 28px; background: #fff; border: solid #bbb; border-width: 1px 0; }
.hbar .thumb { width: 724px; background: #fafafa; border: solid #bbb; border-width: 0 1px; }
.up, .down { height: 13px; background: #fafafa; }
.left, .right { width: 14px; background: #fafafa; }
.up::after, .down::after, .left::after, .right::after { content: ""; border: 4px solid transparent; border-bottom: 5px solid #333; border-top: 0; }
.down::after { transform: rotate(180deg); }
.left::after { transform: rotate(-90deg); }
.right::after { transform: rotate(90deg); }
.wfoot { display: flex; align-items: center; height: 29px; padding: 0 3px 0 4px; }
.show { width: 177px; height: 24px; justify-content: flex-start; gap: 3px; padding-left: 3px; background: linear-gradient(#fff, #f2f2f2); border-color: #aaa; }
.show svg { width: 15px; height: 15px; }
.show.menu::after { right: 2px; bottom: 2px; }
.view { width: 24px; height: 24px; }
.view svg { width: 16px; height: 16px; }
```
